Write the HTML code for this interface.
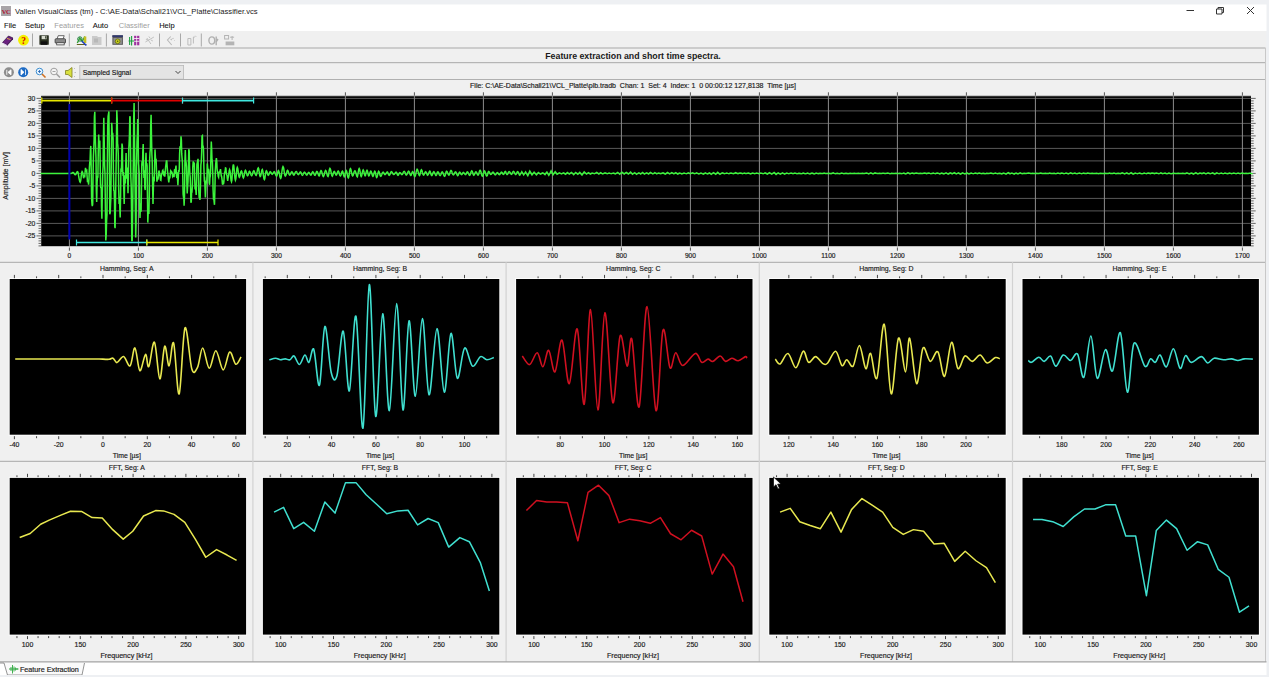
<!DOCTYPE html>
<html><head><meta charset="utf-8"><title>Vallen VisualClass</title>
<style>html,body{margin:0;padding:0;width:1269px;height:677px;overflow:hidden;background:#f0f0f0;font-family:"Liberation Sans",sans-serif} svg{display:block}</style>
</head><body><svg width="1269" height="677" viewBox="0 0 1269 677" font-family="Liberation Sans, sans-serif"><rect x="0.00" y="0.00" width="1269.00" height="677.00" fill="#f0f0f0" />
<rect x="0.00" y="0.00" width="1269.00" height="4.50" fill="#eef0f3" />
<rect x="1266.50" y="0.00" width="2.50" height="677.00" fill="#eef0f3" />
<rect x="0.00" y="4.50" width="1266.50" height="26.50" fill="#ffffff" />
<rect x="1.00" y="6.00" width="10.00" height="10.00" fill="#a8a4a8" />
<text x="6.00" y="13.80" font-size="6.5" fill="#b01030" text-anchor="middle" font-weight="bold"  font-family="Liberation Serif, serif" letter-spacing="-0.5">VC</text>
<text x="15.00" y="14.30" font-size="7.65" fill="#1a1a1a" text-anchor="start" font-weight="normal"  >Vallen VisualClass (tm) - C:\AE-Data\Schall21\VCL_Platte\Classifier.vcs</text>
<line x1="1186.50" y1="10.50" x2="1194.00" y2="10.50" stroke="#333" stroke-width="1" />
<path d="M1216.5 9 h5.5 v5 h-5.5 z M1218 9 v-1.5 h5.5 v5 h-1.5" fill="none" stroke="#333" stroke-width="1"/>
<path d="M1247 7 L1254 14 M1254 7 L1247 14" stroke="#333" stroke-width="1"/>
<text x="4.10" y="28.00" font-size="7.5" fill="#111" text-anchor="start" font-weight="normal" stroke="#111" stroke-width="0.08" >File</text>
<text x="25.00" y="28.00" font-size="7.5" fill="#111" text-anchor="start" font-weight="normal" stroke="#111" stroke-width="0.08" >Setup</text>
<text x="54.30" y="28.00" font-size="7.5" fill="#a0a0a0" text-anchor="start" font-weight="normal"  >Features</text>
<text x="92.70" y="28.00" font-size="7.5" fill="#111" text-anchor="start" font-weight="normal" stroke="#111" stroke-width="0.08" >Auto</text>
<text x="118.80" y="28.00" font-size="7.5" fill="#a0a0a0" text-anchor="start" font-weight="normal"  >Classifier</text>
<text x="159.20" y="28.00" font-size="7.5" fill="#111" text-anchor="start" font-weight="normal" stroke="#111" stroke-width="0.08" >Help</text>
<g transform="translate(2,35)"><path d="M0.5 7.5 L6.5 1 L11 3 L5 10 Z" fill="#6a2080" stroke="#301040" stroke-width="0.7"/><path d="M0.5 7.5 L5 10 L5 11 L0.8 8.7 Z" fill="#e0d0f0"/><path d="M5 10 L11 3 L11 4.2 L5 11 Z" fill="#401050"/><path d="M5 3.5 L8.5 4.5" stroke="#f0c040" stroke-width="0.9"/></g>
<circle cx="23.5" cy="40.2" r="5.4" fill="#f4f000"/>
<text x="23.50" y="43.80" font-size="9.5" fill="#d80000" text-anchor="middle" font-weight="bold"  font-family="Liberation Serif, serif">?</text>
<line x1="32.50" y1="33.50" x2="32.50" y2="46.50" stroke="#a8a8a8" stroke-width="1" />
<g transform="translate(39.4,35.2)"><rect x="0" y="0" width="9.4" height="9.6" rx="0.6" fill="#2a3020"/><rect x="2.2" y="0.6" width="5" height="3.4" fill="#d8dcd0"/><rect x="1.5" y="6.2" width="6.4" height="3.4" fill="#101010"/><rect x="5.8" y="1" width="1" height="2.4" fill="#2a3020"/></g>
<g transform="translate(54.7,35.2)"><path d="M2.5 3.5 L3.5 0.5 H9.5 L8.5 3.5" fill="#fff" stroke="#444" stroke-width="0.8"/><rect x="0.4" y="3.5" width="10.4" height="4.5" rx="1" fill="#8a8a8a" stroke="#333" stroke-width="0.8"/><rect x="2" y="7.5" width="7.5" height="2.2" fill="#eee" stroke="#444" stroke-width="0.8"/></g>
<line x1="69.30" y1="33.50" x2="69.30" y2="46.50" stroke="#a8a8a8" stroke-width="1" />
<g transform="translate(76.3,35)"><path d="M0.5 9.5 H10" stroke="#606020" stroke-width="1"/><path d="M1 8 L3.5 3 L6 6.5 L8.5 1.5" stroke="#30a030" stroke-width="1.4" fill="none"/><rect x="7.5" y="1.5" width="2.5" height="6.5" fill="#c8c020"/><circle cx="3.6" cy="4" r="2.2" fill="none" stroke="#208040" stroke-width="1"/><path d="M5.5 6 L10 10.5" stroke="#2040c0" stroke-width="1.6"/></g>
<g transform="translate(92,35.5)"><path d="M0 0.5 H5 L6 1.5 H9.5 V9.5 H0 Z" fill="#cacaca"/><rect x="2" y="3" width="4" height="4" fill="#b8b8b8"/></g>
<line x1="106.40" y1="33.50" x2="106.40" y2="46.50" stroke="#a8a8a8" stroke-width="1" />
<g transform="translate(112.4,35.3)"><rect x="0" y="0" width="10.5" height="9.5" fill="#555"/><rect x="0" y="0" width="10.5" height="1.8" fill="#303870"/><rect x="1" y="2.6" width="8.5" height="6" fill="#909090"/><circle cx="5.25" cy="6" r="2.4" fill="#c8d020" stroke="#5a6000" stroke-width="0.7"/><circle cx="5.25" cy="6" r="0.8" fill="#5a6000"/></g>
<g transform="translate(128.6,35)"><path d="M1 2 V10 M3 1 V10.5 M0 6 H6" stroke="#20a040" stroke-width="1.1"/><rect x="5.5" y="0.8" width="2.2" height="9.5" fill="#a030a0"/><rect x="8.5" y="0.8" width="2.2" height="9.5" fill="#a030a0"/><path d="M5.5 3.5 H10.7 M5.5 6.3 H10.7" stroke="#fff" stroke-width="0.8"/></g>
<g transform="translate(144.9,35)" stroke="#bcbcbc" stroke-width="0.9" fill="none"><path d="M0.5 7 L9 2 M2 3 L6 9 M1 4.5 L3 5 M6 5 L8 6 M4 1.5 L5 3"/></g>
<line x1="159.50" y1="33.50" x2="159.50" y2="46.50" stroke="#a8a8a8" stroke-width="1" />
<g transform="translate(166.7,35)" stroke="#b8b8b8" stroke-width="1.1" fill="none"><path d="M4 1.5 L0.8 5 L5 10 M4 4 L5 5 M6 3 L6.5 4 M7.5 5.5 L8 5.5"/></g>
<line x1="180.50" y1="33.50" x2="180.50" y2="46.50" stroke="#a8a8a8" stroke-width="1" />
<g transform="translate(186.9,35)" stroke="#bcbcbc" stroke-width="1" fill="none"><path d="M1 3.5 V10 M4 3.5 V10 M1 3.5 H4 M1 10 H4 M6.5 2 V8.5 M6.5 2 H8 M8.5 0.8 L9.2 1.8"/></g>
<line x1="201.30" y1="33.50" x2="201.30" y2="46.50" stroke="#a8a8a8" stroke-width="1" />
<g transform="translate(208.2,35)" stroke="#b0b0b0" stroke-width="1.4" fill="none"><ellipse cx="3.6" cy="5.5" rx="2.9" ry="3.6"/><path d="M8 1.5 V10.2 M9.8 4 L7.5 7.5"/></g>
<g transform="translate(224.1,35)" fill="#b4b4b4"><rect x="0.5" y="0.5" width="4" height="3.5" fill="none" stroke="#b4b4b4" stroke-width="1"/><path d="M6 2.2 H10 M8 1 V5" stroke="#b4b4b4" stroke-width="1" fill="none"/><rect x="1.5" y="6.5" width="8.7" height="3.8"/></g>
<line x1="0.00" y1="48.00" x2="1265.50" y2="48.00" stroke="#a8a8a8" stroke-width="1" />
<text x="633.00" y="59.30" font-size="8.8" fill="#1a1a1a" text-anchor="middle" font-weight="bold"  >Feature extraction and short time spectra.</text>
<line x1="0.00" y1="62.70" x2="1265.50" y2="62.70" stroke="#a8a8a8" stroke-width="1" />
<circle cx="8.9" cy="72.3" r="5" fill="#8c8c8c"/><path d="M6.8 69.8 V74.8 M11 69.8 L8 72.3 L11 74.8 Z" fill="#fff" stroke="#fff" stroke-width="0.9"/>
<circle cx="23.2" cy="72.3" r="5" fill="#1c6ac4"/><path d="M21 69.5 L24 72.3 L21 75 Z M25.5 69.5 V75" fill="#fff" stroke="#fff" stroke-width="0.8"/>
<g transform="translate(35,67)"><circle cx="4.5" cy="4.5" r="3.3" fill="#e8f4ff" stroke="#4090d0" stroke-width="1"/><path d="M3 4.5 H6 M4.5 3 V6" stroke="#2060b0" stroke-width="0.8"/><path d="M7 7 L10.5 10.5" stroke="#d07020" stroke-width="1.6"/></g>
<g transform="translate(49.5,67)"><circle cx="4.5" cy="4.5" r="3.3" fill="#f4f4f4" stroke="#a0a0a0" stroke-width="1"/><path d="M3 4.5 H6" stroke="#909090" stroke-width="0.8"/><path d="M7 7 L10.5 10.5" stroke="#a0a0a0" stroke-width="1.6"/></g>
<g transform="translate(65,67)"><path d="M0.5 3.5 H3 L7 0.5 V10.5 L3 7.5 H0.5 Z" fill="#d8e040" stroke="#808020" stroke-width="0.8"/><path d="M9 2 L10 1 M9.5 5.5 H11 M9 9 L10 10" stroke="#b0b0b0" stroke-width="0.8"/></g>
<rect x="79.80" y="65.40" width="103.80" height="13.80" fill="#e4e4e4" stroke="#b8b8b8" stroke-width="0.8"/>
<text x="82.70" y="74.90" font-size="6.9" fill="#222" text-anchor="start" font-weight="normal" stroke="#222" stroke-width="0.18" >Sampled Signal</text>
<path d="M175.5 71 L178 73.5 L180.5 71" fill="none" stroke="#333" stroke-width="0.9"/>
<line x1="0.00" y1="79.50" x2="1265.50" y2="79.50" stroke="#b0b0b0" stroke-width="1" />
<text x="633.00" y="88.30" font-size="7.0" fill="#222" text-anchor="middle" font-weight="normal" stroke="#222" stroke-width="0.18" xml:space="preserve">File: C:\AE-Data\Schall21\VCL_Platte\plb.tradb  Chan: 1  Set: 4  Index: 1  0 00:00:12 127,8138  Time [µs]</text>
<rect x="41.20" y="95.90" width="1209.80" height="150.30" fill="#000" />
<line x1="41.20" y1="96.40" x2="1251.00" y2="96.40" stroke="#3a3a3a" stroke-width="1" />
<line x1="41.20" y1="235.90" x2="1251.00" y2="235.90" stroke="#5a5a5a" stroke-width="1" />
<line x1="41.20" y1="223.40" x2="1251.00" y2="223.40" stroke="#5a5a5a" stroke-width="1" />
<line x1="41.20" y1="210.90" x2="1251.00" y2="210.90" stroke="#5a5a5a" stroke-width="1" />
<line x1="41.20" y1="198.40" x2="1251.00" y2="198.40" stroke="#5a5a5a" stroke-width="1" />
<line x1="41.20" y1="185.90" x2="1251.00" y2="185.90" stroke="#5a5a5a" stroke-width="1" />
<line x1="41.20" y1="173.40" x2="1251.00" y2="173.40" stroke="#5a5a5a" stroke-width="1" />
<line x1="41.20" y1="160.90" x2="1251.00" y2="160.90" stroke="#5a5a5a" stroke-width="1" />
<line x1="41.20" y1="148.40" x2="1251.00" y2="148.40" stroke="#5a5a5a" stroke-width="1" />
<line x1="41.20" y1="135.90" x2="1251.00" y2="135.90" stroke="#5a5a5a" stroke-width="1" />
<line x1="41.20" y1="123.40" x2="1251.00" y2="123.40" stroke="#5a5a5a" stroke-width="1" />
<line x1="41.20" y1="110.90" x2="1251.00" y2="110.90" stroke="#5a5a5a" stroke-width="1" />
<line x1="41.20" y1="98.40" x2="1251.00" y2="98.40" stroke="#5a5a5a" stroke-width="1" />
<line x1="69.40" y1="95.90" x2="69.40" y2="246.20" stroke="#8c8c8c" stroke-width="1" />
<line x1="69.40" y1="92.30" x2="69.40" y2="95.60" stroke="#555" stroke-width="1" />
<line x1="69.40" y1="247.50" x2="69.40" y2="250.70" stroke="#555" stroke-width="1" />
<text x="69.40" y="257.80" font-size="6.6" fill="#1e1e1e" text-anchor="middle" font-weight="normal" stroke="#1e1e1e" stroke-width="0.18" >0</text>
<line x1="138.40" y1="95.90" x2="138.40" y2="246.20" stroke="#8c8c8c" stroke-width="1" />
<line x1="138.40" y1="92.30" x2="138.40" y2="95.60" stroke="#555" stroke-width="1" />
<line x1="138.40" y1="247.50" x2="138.40" y2="250.70" stroke="#555" stroke-width="1" />
<text x="138.40" y="257.80" font-size="6.6" fill="#1e1e1e" text-anchor="middle" font-weight="normal" stroke="#1e1e1e" stroke-width="0.18" >100</text>
<line x1="207.40" y1="95.90" x2="207.40" y2="246.20" stroke="#8c8c8c" stroke-width="1" />
<line x1="207.40" y1="92.30" x2="207.40" y2="95.60" stroke="#555" stroke-width="1" />
<line x1="207.40" y1="247.50" x2="207.40" y2="250.70" stroke="#555" stroke-width="1" />
<text x="207.40" y="257.80" font-size="6.6" fill="#1e1e1e" text-anchor="middle" font-weight="normal" stroke="#1e1e1e" stroke-width="0.18" >200</text>
<line x1="276.40" y1="95.90" x2="276.40" y2="246.20" stroke="#8c8c8c" stroke-width="1" />
<line x1="276.40" y1="92.30" x2="276.40" y2="95.60" stroke="#555" stroke-width="1" />
<line x1="276.40" y1="247.50" x2="276.40" y2="250.70" stroke="#555" stroke-width="1" />
<text x="276.40" y="257.80" font-size="6.6" fill="#1e1e1e" text-anchor="middle" font-weight="normal" stroke="#1e1e1e" stroke-width="0.18" >300</text>
<line x1="345.40" y1="95.90" x2="345.40" y2="246.20" stroke="#8c8c8c" stroke-width="1" />
<line x1="345.40" y1="92.30" x2="345.40" y2="95.60" stroke="#555" stroke-width="1" />
<line x1="345.40" y1="247.50" x2="345.40" y2="250.70" stroke="#555" stroke-width="1" />
<text x="345.40" y="257.80" font-size="6.6" fill="#1e1e1e" text-anchor="middle" font-weight="normal" stroke="#1e1e1e" stroke-width="0.18" >400</text>
<line x1="414.40" y1="95.90" x2="414.40" y2="246.20" stroke="#8c8c8c" stroke-width="1" />
<line x1="414.40" y1="92.30" x2="414.40" y2="95.60" stroke="#555" stroke-width="1" />
<line x1="414.40" y1="247.50" x2="414.40" y2="250.70" stroke="#555" stroke-width="1" />
<text x="414.40" y="257.80" font-size="6.6" fill="#1e1e1e" text-anchor="middle" font-weight="normal" stroke="#1e1e1e" stroke-width="0.18" >500</text>
<line x1="483.40" y1="95.90" x2="483.40" y2="246.20" stroke="#8c8c8c" stroke-width="1" />
<line x1="483.40" y1="92.30" x2="483.40" y2="95.60" stroke="#555" stroke-width="1" />
<line x1="483.40" y1="247.50" x2="483.40" y2="250.70" stroke="#555" stroke-width="1" />
<text x="483.40" y="257.80" font-size="6.6" fill="#1e1e1e" text-anchor="middle" font-weight="normal" stroke="#1e1e1e" stroke-width="0.18" >600</text>
<line x1="552.40" y1="95.90" x2="552.40" y2="246.20" stroke="#8c8c8c" stroke-width="1" />
<line x1="552.40" y1="92.30" x2="552.40" y2="95.60" stroke="#555" stroke-width="1" />
<line x1="552.40" y1="247.50" x2="552.40" y2="250.70" stroke="#555" stroke-width="1" />
<text x="552.40" y="257.80" font-size="6.6" fill="#1e1e1e" text-anchor="middle" font-weight="normal" stroke="#1e1e1e" stroke-width="0.18" >700</text>
<line x1="621.40" y1="95.90" x2="621.40" y2="246.20" stroke="#8c8c8c" stroke-width="1" />
<line x1="621.40" y1="92.30" x2="621.40" y2="95.60" stroke="#555" stroke-width="1" />
<line x1="621.40" y1="247.50" x2="621.40" y2="250.70" stroke="#555" stroke-width="1" />
<text x="621.40" y="257.80" font-size="6.6" fill="#1e1e1e" text-anchor="middle" font-weight="normal" stroke="#1e1e1e" stroke-width="0.18" >800</text>
<line x1="690.40" y1="95.90" x2="690.40" y2="246.20" stroke="#8c8c8c" stroke-width="1" />
<line x1="690.40" y1="92.30" x2="690.40" y2="95.60" stroke="#555" stroke-width="1" />
<line x1="690.40" y1="247.50" x2="690.40" y2="250.70" stroke="#555" stroke-width="1" />
<text x="690.40" y="257.80" font-size="6.6" fill="#1e1e1e" text-anchor="middle" font-weight="normal" stroke="#1e1e1e" stroke-width="0.18" >900</text>
<line x1="759.40" y1="95.90" x2="759.40" y2="246.20" stroke="#8c8c8c" stroke-width="1" />
<line x1="759.40" y1="92.30" x2="759.40" y2="95.60" stroke="#555" stroke-width="1" />
<line x1="759.40" y1="247.50" x2="759.40" y2="250.70" stroke="#555" stroke-width="1" />
<text x="759.40" y="257.80" font-size="6.6" fill="#1e1e1e" text-anchor="middle" font-weight="normal" stroke="#1e1e1e" stroke-width="0.18" >1000</text>
<line x1="828.40" y1="95.90" x2="828.40" y2="246.20" stroke="#8c8c8c" stroke-width="1" />
<line x1="828.40" y1="92.30" x2="828.40" y2="95.60" stroke="#555" stroke-width="1" />
<line x1="828.40" y1="247.50" x2="828.40" y2="250.70" stroke="#555" stroke-width="1" />
<text x="828.40" y="257.80" font-size="6.6" fill="#1e1e1e" text-anchor="middle" font-weight="normal" stroke="#1e1e1e" stroke-width="0.18" >1100</text>
<line x1="897.40" y1="95.90" x2="897.40" y2="246.20" stroke="#8c8c8c" stroke-width="1" />
<line x1="897.40" y1="92.30" x2="897.40" y2="95.60" stroke="#555" stroke-width="1" />
<line x1="897.40" y1="247.50" x2="897.40" y2="250.70" stroke="#555" stroke-width="1" />
<text x="897.40" y="257.80" font-size="6.6" fill="#1e1e1e" text-anchor="middle" font-weight="normal" stroke="#1e1e1e" stroke-width="0.18" >1200</text>
<line x1="966.40" y1="95.90" x2="966.40" y2="246.20" stroke="#8c8c8c" stroke-width="1" />
<line x1="966.40" y1="92.30" x2="966.40" y2="95.60" stroke="#555" stroke-width="1" />
<line x1="966.40" y1="247.50" x2="966.40" y2="250.70" stroke="#555" stroke-width="1" />
<text x="966.40" y="257.80" font-size="6.6" fill="#1e1e1e" text-anchor="middle" font-weight="normal" stroke="#1e1e1e" stroke-width="0.18" >1300</text>
<line x1="1035.40" y1="95.90" x2="1035.40" y2="246.20" stroke="#8c8c8c" stroke-width="1" />
<line x1="1035.40" y1="92.30" x2="1035.40" y2="95.60" stroke="#555" stroke-width="1" />
<line x1="1035.40" y1="247.50" x2="1035.40" y2="250.70" stroke="#555" stroke-width="1" />
<text x="1035.40" y="257.80" font-size="6.6" fill="#1e1e1e" text-anchor="middle" font-weight="normal" stroke="#1e1e1e" stroke-width="0.18" >1400</text>
<line x1="1104.40" y1="95.90" x2="1104.40" y2="246.20" stroke="#8c8c8c" stroke-width="1" />
<line x1="1104.40" y1="92.30" x2="1104.40" y2="95.60" stroke="#555" stroke-width="1" />
<line x1="1104.40" y1="247.50" x2="1104.40" y2="250.70" stroke="#555" stroke-width="1" />
<text x="1104.40" y="257.80" font-size="6.6" fill="#1e1e1e" text-anchor="middle" font-weight="normal" stroke="#1e1e1e" stroke-width="0.18" >1500</text>
<line x1="1173.40" y1="95.90" x2="1173.40" y2="246.20" stroke="#8c8c8c" stroke-width="1" />
<line x1="1173.40" y1="92.30" x2="1173.40" y2="95.60" stroke="#555" stroke-width="1" />
<line x1="1173.40" y1="247.50" x2="1173.40" y2="250.70" stroke="#555" stroke-width="1" />
<text x="1173.40" y="257.80" font-size="6.6" fill="#1e1e1e" text-anchor="middle" font-weight="normal" stroke="#1e1e1e" stroke-width="0.18" >1600</text>
<line x1="1242.40" y1="95.90" x2="1242.40" y2="246.20" stroke="#8c8c8c" stroke-width="1" />
<line x1="1242.40" y1="92.30" x2="1242.40" y2="95.60" stroke="#555" stroke-width="1" />
<line x1="1242.40" y1="247.50" x2="1242.40" y2="250.70" stroke="#555" stroke-width="1" />
<text x="1242.40" y="257.80" font-size="6.6" fill="#1e1e1e" text-anchor="middle" font-weight="normal" stroke="#1e1e1e" stroke-width="0.18" >1700</text>
<line x1="38.50" y1="245.90" x2="41.20" y2="245.90" stroke="#444" stroke-width="0.8" />
<line x1="1251.00" y1="245.90" x2="1253.70" y2="245.90" stroke="#444" stroke-width="0.8" />
<line x1="38.50" y1="243.40" x2="41.20" y2="243.40" stroke="#444" stroke-width="0.8" />
<line x1="1251.00" y1="243.40" x2="1253.70" y2="243.40" stroke="#444" stroke-width="0.8" />
<line x1="38.50" y1="240.90" x2="41.20" y2="240.90" stroke="#444" stroke-width="0.8" />
<line x1="1251.00" y1="240.90" x2="1253.70" y2="240.90" stroke="#444" stroke-width="0.8" />
<line x1="38.50" y1="238.40" x2="41.20" y2="238.40" stroke="#444" stroke-width="0.8" />
<line x1="1251.00" y1="238.40" x2="1253.70" y2="238.40" stroke="#444" stroke-width="0.8" />
<line x1="36.50" y1="235.90" x2="41.20" y2="235.90" stroke="#444" stroke-width="0.8" />
<line x1="1251.00" y1="235.90" x2="1255.70" y2="235.90" stroke="#444" stroke-width="0.8" />
<line x1="38.50" y1="233.40" x2="41.20" y2="233.40" stroke="#444" stroke-width="0.8" />
<line x1="1251.00" y1="233.40" x2="1253.70" y2="233.40" stroke="#444" stroke-width="0.8" />
<line x1="38.50" y1="230.90" x2="41.20" y2="230.90" stroke="#444" stroke-width="0.8" />
<line x1="1251.00" y1="230.90" x2="1253.70" y2="230.90" stroke="#444" stroke-width="0.8" />
<line x1="38.50" y1="228.40" x2="41.20" y2="228.40" stroke="#444" stroke-width="0.8" />
<line x1="1251.00" y1="228.40" x2="1253.70" y2="228.40" stroke="#444" stroke-width="0.8" />
<line x1="38.50" y1="225.90" x2="41.20" y2="225.90" stroke="#444" stroke-width="0.8" />
<line x1="1251.00" y1="225.90" x2="1253.70" y2="225.90" stroke="#444" stroke-width="0.8" />
<line x1="36.50" y1="223.40" x2="41.20" y2="223.40" stroke="#444" stroke-width="0.8" />
<line x1="1251.00" y1="223.40" x2="1255.70" y2="223.40" stroke="#444" stroke-width="0.8" />
<line x1="38.50" y1="220.90" x2="41.20" y2="220.90" stroke="#444" stroke-width="0.8" />
<line x1="1251.00" y1="220.90" x2="1253.70" y2="220.90" stroke="#444" stroke-width="0.8" />
<line x1="38.50" y1="218.40" x2="41.20" y2="218.40" stroke="#444" stroke-width="0.8" />
<line x1="1251.00" y1="218.40" x2="1253.70" y2="218.40" stroke="#444" stroke-width="0.8" />
<line x1="38.50" y1="215.90" x2="41.20" y2="215.90" stroke="#444" stroke-width="0.8" />
<line x1="1251.00" y1="215.90" x2="1253.70" y2="215.90" stroke="#444" stroke-width="0.8" />
<line x1="38.50" y1="213.40" x2="41.20" y2="213.40" stroke="#444" stroke-width="0.8" />
<line x1="1251.00" y1="213.40" x2="1253.70" y2="213.40" stroke="#444" stroke-width="0.8" />
<line x1="36.50" y1="210.90" x2="41.20" y2="210.90" stroke="#444" stroke-width="0.8" />
<line x1="1251.00" y1="210.90" x2="1255.70" y2="210.90" stroke="#444" stroke-width="0.8" />
<line x1="38.50" y1="208.40" x2="41.20" y2="208.40" stroke="#444" stroke-width="0.8" />
<line x1="1251.00" y1="208.40" x2="1253.70" y2="208.40" stroke="#444" stroke-width="0.8" />
<line x1="38.50" y1="205.90" x2="41.20" y2="205.90" stroke="#444" stroke-width="0.8" />
<line x1="1251.00" y1="205.90" x2="1253.70" y2="205.90" stroke="#444" stroke-width="0.8" />
<line x1="38.50" y1="203.40" x2="41.20" y2="203.40" stroke="#444" stroke-width="0.8" />
<line x1="1251.00" y1="203.40" x2="1253.70" y2="203.40" stroke="#444" stroke-width="0.8" />
<line x1="38.50" y1="200.90" x2="41.20" y2="200.90" stroke="#444" stroke-width="0.8" />
<line x1="1251.00" y1="200.90" x2="1253.70" y2="200.90" stroke="#444" stroke-width="0.8" />
<line x1="36.50" y1="198.40" x2="41.20" y2="198.40" stroke="#444" stroke-width="0.8" />
<line x1="1251.00" y1="198.40" x2="1255.70" y2="198.40" stroke="#444" stroke-width="0.8" />
<line x1="38.50" y1="195.90" x2="41.20" y2="195.90" stroke="#444" stroke-width="0.8" />
<line x1="1251.00" y1="195.90" x2="1253.70" y2="195.90" stroke="#444" stroke-width="0.8" />
<line x1="38.50" y1="193.40" x2="41.20" y2="193.40" stroke="#444" stroke-width="0.8" />
<line x1="1251.00" y1="193.40" x2="1253.70" y2="193.40" stroke="#444" stroke-width="0.8" />
<line x1="38.50" y1="190.90" x2="41.20" y2="190.90" stroke="#444" stroke-width="0.8" />
<line x1="1251.00" y1="190.90" x2="1253.70" y2="190.90" stroke="#444" stroke-width="0.8" />
<line x1="38.50" y1="188.40" x2="41.20" y2="188.40" stroke="#444" stroke-width="0.8" />
<line x1="1251.00" y1="188.40" x2="1253.70" y2="188.40" stroke="#444" stroke-width="0.8" />
<line x1="36.50" y1="185.90" x2="41.20" y2="185.90" stroke="#444" stroke-width="0.8" />
<line x1="1251.00" y1="185.90" x2="1255.70" y2="185.90" stroke="#444" stroke-width="0.8" />
<line x1="38.50" y1="183.40" x2="41.20" y2="183.40" stroke="#444" stroke-width="0.8" />
<line x1="1251.00" y1="183.40" x2="1253.70" y2="183.40" stroke="#444" stroke-width="0.8" />
<line x1="38.50" y1="180.90" x2="41.20" y2="180.90" stroke="#444" stroke-width="0.8" />
<line x1="1251.00" y1="180.90" x2="1253.70" y2="180.90" stroke="#444" stroke-width="0.8" />
<line x1="38.50" y1="178.40" x2="41.20" y2="178.40" stroke="#444" stroke-width="0.8" />
<line x1="1251.00" y1="178.40" x2="1253.70" y2="178.40" stroke="#444" stroke-width="0.8" />
<line x1="38.50" y1="175.90" x2="41.20" y2="175.90" stroke="#444" stroke-width="0.8" />
<line x1="1251.00" y1="175.90" x2="1253.70" y2="175.90" stroke="#444" stroke-width="0.8" />
<line x1="36.50" y1="173.40" x2="41.20" y2="173.40" stroke="#444" stroke-width="0.8" />
<line x1="1251.00" y1="173.40" x2="1255.70" y2="173.40" stroke="#444" stroke-width="0.8" />
<line x1="38.50" y1="170.90" x2="41.20" y2="170.90" stroke="#444" stroke-width="0.8" />
<line x1="1251.00" y1="170.90" x2="1253.70" y2="170.90" stroke="#444" stroke-width="0.8" />
<line x1="38.50" y1="168.40" x2="41.20" y2="168.40" stroke="#444" stroke-width="0.8" />
<line x1="1251.00" y1="168.40" x2="1253.70" y2="168.40" stroke="#444" stroke-width="0.8" />
<line x1="38.50" y1="165.90" x2="41.20" y2="165.90" stroke="#444" stroke-width="0.8" />
<line x1="1251.00" y1="165.90" x2="1253.70" y2="165.90" stroke="#444" stroke-width="0.8" />
<line x1="38.50" y1="163.40" x2="41.20" y2="163.40" stroke="#444" stroke-width="0.8" />
<line x1="1251.00" y1="163.40" x2="1253.70" y2="163.40" stroke="#444" stroke-width="0.8" />
<line x1="36.50" y1="160.90" x2="41.20" y2="160.90" stroke="#444" stroke-width="0.8" />
<line x1="1251.00" y1="160.90" x2="1255.70" y2="160.90" stroke="#444" stroke-width="0.8" />
<line x1="38.50" y1="158.40" x2="41.20" y2="158.40" stroke="#444" stroke-width="0.8" />
<line x1="1251.00" y1="158.40" x2="1253.70" y2="158.40" stroke="#444" stroke-width="0.8" />
<line x1="38.50" y1="155.90" x2="41.20" y2="155.90" stroke="#444" stroke-width="0.8" />
<line x1="1251.00" y1="155.90" x2="1253.70" y2="155.90" stroke="#444" stroke-width="0.8" />
<line x1="38.50" y1="153.40" x2="41.20" y2="153.40" stroke="#444" stroke-width="0.8" />
<line x1="1251.00" y1="153.40" x2="1253.70" y2="153.40" stroke="#444" stroke-width="0.8" />
<line x1="38.50" y1="150.90" x2="41.20" y2="150.90" stroke="#444" stroke-width="0.8" />
<line x1="1251.00" y1="150.90" x2="1253.70" y2="150.90" stroke="#444" stroke-width="0.8" />
<line x1="36.50" y1="148.40" x2="41.20" y2="148.40" stroke="#444" stroke-width="0.8" />
<line x1="1251.00" y1="148.40" x2="1255.70" y2="148.40" stroke="#444" stroke-width="0.8" />
<line x1="38.50" y1="145.90" x2="41.20" y2="145.90" stroke="#444" stroke-width="0.8" />
<line x1="1251.00" y1="145.90" x2="1253.70" y2="145.90" stroke="#444" stroke-width="0.8" />
<line x1="38.50" y1="143.40" x2="41.20" y2="143.40" stroke="#444" stroke-width="0.8" />
<line x1="1251.00" y1="143.40" x2="1253.70" y2="143.40" stroke="#444" stroke-width="0.8" />
<line x1="38.50" y1="140.90" x2="41.20" y2="140.90" stroke="#444" stroke-width="0.8" />
<line x1="1251.00" y1="140.90" x2="1253.70" y2="140.90" stroke="#444" stroke-width="0.8" />
<line x1="38.50" y1="138.40" x2="41.20" y2="138.40" stroke="#444" stroke-width="0.8" />
<line x1="1251.00" y1="138.40" x2="1253.70" y2="138.40" stroke="#444" stroke-width="0.8" />
<line x1="36.50" y1="135.90" x2="41.20" y2="135.90" stroke="#444" stroke-width="0.8" />
<line x1="1251.00" y1="135.90" x2="1255.70" y2="135.90" stroke="#444" stroke-width="0.8" />
<line x1="38.50" y1="133.40" x2="41.20" y2="133.40" stroke="#444" stroke-width="0.8" />
<line x1="1251.00" y1="133.40" x2="1253.70" y2="133.40" stroke="#444" stroke-width="0.8" />
<line x1="38.50" y1="130.90" x2="41.20" y2="130.90" stroke="#444" stroke-width="0.8" />
<line x1="1251.00" y1="130.90" x2="1253.70" y2="130.90" stroke="#444" stroke-width="0.8" />
<line x1="38.50" y1="128.40" x2="41.20" y2="128.40" stroke="#444" stroke-width="0.8" />
<line x1="1251.00" y1="128.40" x2="1253.70" y2="128.40" stroke="#444" stroke-width="0.8" />
<line x1="38.50" y1="125.90" x2="41.20" y2="125.90" stroke="#444" stroke-width="0.8" />
<line x1="1251.00" y1="125.90" x2="1253.70" y2="125.90" stroke="#444" stroke-width="0.8" />
<line x1="36.50" y1="123.40" x2="41.20" y2="123.40" stroke="#444" stroke-width="0.8" />
<line x1="1251.00" y1="123.40" x2="1255.70" y2="123.40" stroke="#444" stroke-width="0.8" />
<line x1="38.50" y1="120.90" x2="41.20" y2="120.90" stroke="#444" stroke-width="0.8" />
<line x1="1251.00" y1="120.90" x2="1253.70" y2="120.90" stroke="#444" stroke-width="0.8" />
<line x1="38.50" y1="118.40" x2="41.20" y2="118.40" stroke="#444" stroke-width="0.8" />
<line x1="1251.00" y1="118.40" x2="1253.70" y2="118.40" stroke="#444" stroke-width="0.8" />
<line x1="38.50" y1="115.90" x2="41.20" y2="115.90" stroke="#444" stroke-width="0.8" />
<line x1="1251.00" y1="115.90" x2="1253.70" y2="115.90" stroke="#444" stroke-width="0.8" />
<line x1="38.50" y1="113.40" x2="41.20" y2="113.40" stroke="#444" stroke-width="0.8" />
<line x1="1251.00" y1="113.40" x2="1253.70" y2="113.40" stroke="#444" stroke-width="0.8" />
<line x1="36.50" y1="110.90" x2="41.20" y2="110.90" stroke="#444" stroke-width="0.8" />
<line x1="1251.00" y1="110.90" x2="1255.70" y2="110.90" stroke="#444" stroke-width="0.8" />
<line x1="38.50" y1="108.40" x2="41.20" y2="108.40" stroke="#444" stroke-width="0.8" />
<line x1="1251.00" y1="108.40" x2="1253.70" y2="108.40" stroke="#444" stroke-width="0.8" />
<line x1="38.50" y1="105.90" x2="41.20" y2="105.90" stroke="#444" stroke-width="0.8" />
<line x1="1251.00" y1="105.90" x2="1253.70" y2="105.90" stroke="#444" stroke-width="0.8" />
<line x1="38.50" y1="103.40" x2="41.20" y2="103.40" stroke="#444" stroke-width="0.8" />
<line x1="1251.00" y1="103.40" x2="1253.70" y2="103.40" stroke="#444" stroke-width="0.8" />
<line x1="38.50" y1="100.90" x2="41.20" y2="100.90" stroke="#444" stroke-width="0.8" />
<line x1="1251.00" y1="100.90" x2="1253.70" y2="100.90" stroke="#444" stroke-width="0.8" />
<line x1="36.50" y1="98.40" x2="41.20" y2="98.40" stroke="#444" stroke-width="0.8" />
<line x1="1251.00" y1="98.40" x2="1255.70" y2="98.40" stroke="#444" stroke-width="0.8" />
<text x="35.40" y="238.30" font-size="6.8" fill="#1e1e1e" text-anchor="end" font-weight="normal" stroke="#1e1e1e" stroke-width="0.18" >-25</text>
<text x="35.40" y="225.80" font-size="6.8" fill="#1e1e1e" text-anchor="end" font-weight="normal" stroke="#1e1e1e" stroke-width="0.18" >-20</text>
<text x="35.40" y="213.30" font-size="6.8" fill="#1e1e1e" text-anchor="end" font-weight="normal" stroke="#1e1e1e" stroke-width="0.18" >-15</text>
<text x="35.40" y="200.80" font-size="6.8" fill="#1e1e1e" text-anchor="end" font-weight="normal" stroke="#1e1e1e" stroke-width="0.18" >-10</text>
<text x="35.40" y="188.30" font-size="6.8" fill="#1e1e1e" text-anchor="end" font-weight="normal" stroke="#1e1e1e" stroke-width="0.18" >-5</text>
<text x="35.40" y="175.80" font-size="6.8" fill="#1e1e1e" text-anchor="end" font-weight="normal" stroke="#1e1e1e" stroke-width="0.18" >0</text>
<text x="35.40" y="163.30" font-size="6.8" fill="#1e1e1e" text-anchor="end" font-weight="normal" stroke="#1e1e1e" stroke-width="0.18" >5</text>
<text x="35.40" y="150.80" font-size="6.8" fill="#1e1e1e" text-anchor="end" font-weight="normal" stroke="#1e1e1e" stroke-width="0.18" >10</text>
<text x="35.40" y="138.30" font-size="6.8" fill="#1e1e1e" text-anchor="end" font-weight="normal" stroke="#1e1e1e" stroke-width="0.18" >15</text>
<text x="35.40" y="125.80" font-size="6.8" fill="#1e1e1e" text-anchor="end" font-weight="normal" stroke="#1e1e1e" stroke-width="0.18" >20</text>
<text x="35.40" y="113.30" font-size="6.8" fill="#1e1e1e" text-anchor="end" font-weight="normal" stroke="#1e1e1e" stroke-width="0.18" >25</text>
<text x="35.40" y="100.80" font-size="6.8" fill="#1e1e1e" text-anchor="end" font-weight="normal" stroke="#1e1e1e" stroke-width="0.18" >30</text>
<text x="0.00" y="0.00" font-size="7.0" fill="#1e1e1e" text-anchor="middle" font-weight="normal" stroke="#1e1e1e" stroke-width="0.18" transform="translate(8.2 175.9) rotate(-90)">Amplitude [mV]</text>
<polyline points="40.4,173.4 41.8,173.4 43.2,173.4 44.6,173.4 46.0,173.4 47.4,173.4 48.8,173.4 50.2,173.4 51.6,173.4 53.0,173.4 54.4,173.4 55.8,173.4 57.2,173.4 58.6,173.4 60.0,173.4 61.4,173.4 62.8,173.4 64.1,173.4 65.5,173.4 66.9,173.4 68.3,173.4 69.7,173.4 71.1,173.4 71.5,173.3 71.9,173.1 72.3,172.8 72.7,172.5 73.1,172.5 73.4,172.6 73.8,173.0 74.2,173.6 74.5,174.2 74.9,174.7 75.3,174.8 75.6,174.6 76.0,174.0 76.4,173.2 76.8,172.4 77.1,171.9 77.5,171.7 77.9,172.2 78.3,173.6 78.6,175.7 79.0,178.1 79.4,180.2 79.8,181.6 80.2,182.2 80.6,181.1 81.0,178.5 81.3,175.2 81.7,172.5 82.1,171.5 82.5,172.1 82.9,173.6 83.2,175.9 83.6,178.2 84.0,176.6 84.4,175.9 84.8,176.2 85.1,171.8 85.5,167.9 85.9,170.0 86.3,171.1 86.7,170.6 87.1,176.3 87.5,182.2 87.9,181.2 88.3,182.1 88.6,184.6 89.0,178.4 89.4,167.5 89.7,163.1 90.1,160.0 90.4,150.7 90.8,145.9 91.2,168.6 91.6,198.3 92.0,204.3 92.3,206.1 92.7,204.2 93.0,181.0 93.4,156.4 93.7,149.9 94.1,139.5 94.4,116.8 94.8,111.8 95.2,133.4 95.6,146.9 96.0,158.5 96.3,189.5 96.7,201.9 97.1,182.8 97.5,176.6 97.9,176.7 98.3,151.0 98.7,134.4 99.1,147.3 99.4,148.3 99.8,140.4 100.1,156.9 100.5,184.4 100.8,188.3 101.2,187.3 101.5,206.9 101.9,218.7 102.3,195.1 102.7,173.2 103.1,166.1 103.4,138.6 103.8,117.8 104.2,140.5 104.6,165.0 105.0,174.5 105.4,208.3 105.8,240.4 106.2,235.2 106.6,220.7 107.0,214.4 107.3,175.2 107.7,126.4 108.1,116.3 108.5,113.8 108.9,111.4 109.4,160.1 109.8,214.2 110.2,212.7 110.6,203.4 110.9,197.6 111.3,161.1 111.7,122.8 112.0,127.3 112.4,139.5 112.7,132.8 113.1,138.8 113.4,170.4 113.8,191.2 114.1,190.2 114.5,201.5 114.8,226.7 115.1,228.2 115.6,195.2 116.0,172.3 116.4,144.0 116.8,110.2 117.2,119.4 117.6,144.2 117.9,145.8 118.3,154.8 118.7,189.3 119.1,204.0 119.5,196.7 119.8,208.6 120.2,217.5 120.6,194.0 120.9,170.0 121.3,170.4 121.6,164.0 122.0,143.5 122.4,146.8 122.7,170.9 123.1,176.0 123.4,171.9 123.8,189.5 124.2,203.9 124.6,185.8 125.0,175.2 125.4,183.5 125.7,167.7 126.1,153.0 126.5,170.1 126.9,178.8 127.3,167.5 127.6,175.7 128.0,193.2 128.4,178.2 128.7,150.1 129.1,143.1 129.4,137.4 129.8,117.0 130.1,116.3 130.5,148.2 130.8,176.0 131.2,186.0 131.5,208.4 131.8,240.4 132.2,240.4 132.6,216.3 132.9,191.4 133.3,165.2 133.7,119.1 134.1,102.9 134.5,135.3 134.9,174.1 135.3,202.4 135.7,237.4 136.1,223.2 136.5,166.8 137.0,141.8 137.4,133.9 137.7,119.0 138.1,131.6 138.5,162.9 138.9,168.5 139.3,174.2 139.6,205.4 140.0,218.0 140.4,203.3 140.7,204.4 141.1,211.8 141.4,192.7 141.8,164.3 142.1,161.1 142.5,165.8 142.8,151.4 143.2,144.1 143.6,170.5 144.0,178.0 144.4,170.3 144.8,187.9 145.2,190.0 145.6,162.4 146.0,152.8 146.3,165.0 146.7,163.2 147.1,166.1 147.5,199.3 147.8,222.6 148.2,212.2 148.6,208.0 148.9,214.0 149.3,194.0 149.6,161.2 150.0,152.5 150.4,148.5 150.7,125.2 151.1,114.7 151.5,137.1 151.9,154.7 152.2,160.7 152.6,185.5 153.0,204.1 153.4,187.8 153.8,176.7 154.2,181.6 154.6,166.2 155.0,149.4 155.4,156.7 155.7,161.3 156.1,158.9 156.5,170.7 156.9,181.6 157.3,179.7 157.7,178.7 158.1,178.8 158.5,175.0 158.9,170.6 159.3,171.6 159.7,174.5 160.1,176.3 160.5,180.1 160.9,180.4 161.3,175.8 161.7,173.7 162.1,173.5 162.5,170.8 162.9,170.2 163.3,173.1 163.6,174.2 164.0,173.1 164.4,174.6 164.8,176.7 165.2,172.8 165.6,167.1 166.0,164.2 166.4,160.9 166.8,160.9 167.2,166.7 167.6,171.8 168.0,174.6 168.4,179.5 168.8,182.3 169.1,179.7 169.5,177.5 169.9,177.6 170.2,174.9 170.6,171.1 171.0,171.9 171.4,173.7 171.8,172.2 172.2,173.0 172.6,176.4 172.9,175.9 173.3,174.0 173.7,176.6 174.1,176.6 174.5,170.0 174.9,169.7 175.2,174.0 175.6,168.7 176.0,165.5 176.4,175.3 176.8,177.9 177.1,172.3 177.5,178.4 177.9,185.3 178.3,177.6 178.6,170.1 179.0,172.3 179.3,168.6 179.6,153.9 180.0,146.4 180.3,149.4 180.7,145.5 181.0,136.3 181.4,140.2 181.7,153.4 182.1,158.6 182.4,161.9 182.8,177.4 183.1,194.2 183.5,197.2 183.8,197.2 184.1,205.6 184.5,196.6 184.9,161.8 185.3,150.0 185.7,160.8 186.1,162.4 186.5,167.1 186.9,185.4 187.2,193.4 187.6,187.3 188.0,181.9 188.4,168.0 188.8,149.2 189.2,150.8 189.5,165.7 189.9,174.5 190.2,176.8 190.6,188.3 190.9,202.8 191.3,201.7 191.6,191.6 192.0,191.7 192.4,185.2 192.8,166.2 193.2,161.4 193.6,166.6 194.0,162.5 194.3,163.4 194.7,179.5 195.1,189.5 195.4,186.5 195.8,190.0 196.2,195.0 196.5,181.9 196.9,164.4 197.3,162.6 197.6,163.4 198.0,158.7 198.4,169.3 198.8,191.5 199.2,198.0 199.5,195.4 199.9,200.0 200.2,197.4 200.6,179.2 200.9,164.9 201.3,161.5 201.7,151.5 202.0,136.0 202.4,135.6 202.7,146.1 203.1,146.2 203.5,149.2 203.9,167.8 204.3,179.5 204.6,179.0 205.0,187.8 205.4,197.4 205.8,188.8 206.2,180.6 206.6,183.4 207.0,176.0 207.3,163.4 207.7,167.7 208.1,173.6 208.5,168.8 208.8,170.6 209.2,182.9 209.6,184.8 209.9,178.0 210.3,176.1 210.6,170.0 211.0,152.2 211.3,141.5 211.7,149.9 212.0,160.0 212.4,162.3 212.7,171.4 213.1,190.0 213.5,199.6 213.8,198.4 214.2,202.3 214.5,204.8 214.9,189.0 215.3,170.8 215.7,164.3 216.0,161.1 216.4,158.1 216.8,161.8 217.1,169.1 217.5,172.3 217.9,173.3 218.2,176.4 218.6,177.3 219.0,173.2 219.4,171.3 219.7,172.5 220.1,170.7 220.5,169.2 220.9,172.9 221.3,176.2 221.6,176.3 222.0,179.1 222.4,183.9 222.8,184.1 223.1,182.8 223.5,184.0 223.9,181.7 224.3,175.2 224.7,172.3 225.1,171.3 225.5,168.0 225.9,168.2 226.2,172.5 226.6,174.8 227.0,175.3 227.3,178.3 227.7,180.8 228.1,178.0 228.5,176.0 228.9,173.0 229.3,170.5 229.6,169.6 230.0,170.8 230.4,173.8 230.7,177.5 231.1,180.6 231.5,181.7 231.9,180.1 232.2,175.8 232.6,170.5 233.0,166.2 233.4,164.5 233.8,166.0 234.2,170.0 234.6,174.8 235.0,178.7 235.4,180.2 235.8,179.0 236.2,175.7 236.6,171.7 236.9,168.4 237.3,167.2 237.7,168.1 238.1,170.6 238.5,173.8 238.9,176.3 239.3,177.2 239.6,176.8 240.0,175.6 240.3,174.1 240.7,172.5 241.0,171.3 241.4,170.9 241.8,171.6 242.2,173.3 242.6,175.5 243.0,177.2 243.4,177.9 243.8,177.1 244.2,175.3 244.6,172.9 245.0,171.0 245.4,170.3 245.7,170.7 246.1,171.7 246.5,173.1 246.9,174.4 247.2,175.5 247.6,175.8 248.0,175.4 248.4,174.2 248.8,172.8 249.1,171.6 249.5,171.2 249.9,171.6 250.4,172.8 250.8,174.2 251.2,175.4 251.6,175.8 251.9,175.5 252.3,174.5 252.7,173.3 253.0,172.0 253.4,171.1 253.8,170.7 254.1,171.0 254.5,171.9 254.9,173.1 255.3,174.3 255.7,175.1 256.1,175.4 256.4,174.9 256.8,173.5 257.2,171.6 257.5,169.7 257.9,168.3 258.3,167.8 258.7,168.6 259.0,170.8 259.4,173.5 259.8,175.7 260.2,176.5 260.6,176.1 260.9,174.8 261.3,173.0 261.6,171.3 261.9,170.0 262.3,169.5 262.6,170.2 263.0,172.0 263.3,174.6 263.7,177.1 264.0,179.0 264.4,179.6 264.8,178.8 265.1,176.6 265.5,173.8 265.9,171.6 266.3,170.7 266.6,171.0 267.0,171.8 267.3,173.0 267.6,174.1 268.0,175.0 268.3,175.3 268.7,174.9 269.1,174.0 269.5,172.9 269.9,172.0 270.3,171.7 270.7,172.0 271.1,172.6 271.4,173.5 271.8,174.1 272.2,174.4 272.6,174.1 273.0,173.5 273.4,172.6 273.8,172.0 274.2,171.7 274.6,172.0 275.0,172.8 275.4,173.9 275.8,175.0 276.2,175.8 276.6,176.1 276.9,175.6 277.3,174.2 277.7,172.5 278.1,171.1 278.4,170.6 278.8,171.1 279.2,172.6 279.6,174.5 279.9,176.5 280.3,177.9 280.7,178.4 281.1,177.6 281.4,175.5 281.8,172.5 282.2,169.6 282.6,167.4 283.0,166.6 283.4,167.2 283.8,169.0 284.1,171.3 284.5,173.7 284.9,175.5 285.3,176.1 285.7,175.7 286.1,174.7 286.5,173.2 286.9,171.7 287.2,170.7 287.6,170.3 288.0,170.8 288.4,172.0 288.8,173.5 289.2,174.7 289.6,175.1 290.0,174.9 290.4,174.3 290.8,173.4 291.1,172.6 291.5,172.0 291.9,171.7 292.3,172.1 292.7,172.9 293.0,173.9 293.4,174.8 293.8,175.1 294.2,174.9 294.6,174.2 294.9,173.3 295.3,172.4 295.7,171.7 296.1,171.5 296.5,171.7 296.9,172.3 297.2,173.0 297.6,173.8 298.0,174.4 298.4,174.6 298.7,174.4 299.0,173.9 299.4,173.2 299.7,172.6 300.1,172.1 300.4,171.9 300.8,172.3 301.2,173.1 301.6,174.2 302.0,175.1 302.4,175.4 302.8,175.1 303.2,174.3 303.6,173.3 304.0,172.5 304.4,172.2 304.8,172.4 305.2,172.9 305.6,173.7 306.0,174.4 306.4,174.9 306.8,175.1 307.2,174.8 307.5,174.2 307.9,173.3 308.3,172.7 308.7,172.4 309.1,172.6 309.4,173.1 309.8,173.8 310.2,174.4 310.5,174.9 310.9,175.1 311.3,174.8 311.6,173.9 312.0,172.9 312.4,172.1 312.7,171.7 313.1,172.0 313.5,172.6 313.8,173.5 314.2,174.4 314.6,175.1 315.0,175.3 315.4,174.9 315.7,174.0 316.1,172.7 316.5,171.8 316.9,171.4 317.3,171.7 317.6,172.5 318.0,173.6 318.4,174.7 318.7,175.6 319.1,175.9 319.5,175.4 319.8,174.0 320.2,172.4 320.6,171.1 321.0,170.6 321.4,171.0 321.8,172.1 322.2,173.6 322.6,175.1 323.0,176.1 323.3,176.5 323.7,176.1 324.1,175.0 324.5,173.5 324.9,171.9 325.3,170.8 325.6,170.4 326.0,170.8 326.4,171.9 326.8,173.4 327.2,175.0 327.6,176.1 328.0,176.5 328.4,175.7 328.8,173.7 329.1,171.2 329.5,169.2 329.9,168.4 330.3,168.9 330.7,170.3 331.1,172.3 331.5,174.2 331.9,175.6 332.3,176.1 332.6,175.6 333.0,174.5 333.4,173.0 333.8,171.8 334.2,171.4 334.5,171.6 334.9,172.3 335.2,173.2 335.6,174.2 335.9,174.9 336.3,175.1 336.7,174.7 337.0,173.7 337.4,172.4 337.8,171.4 338.2,171.0 338.6,171.4 338.9,172.3 339.3,173.5 339.6,174.7 340.0,175.6 340.4,175.9 340.8,175.4 341.2,174.2 341.6,172.8 342.0,171.6 342.4,171.1 342.8,171.6 343.1,173.0 343.5,174.7 343.9,176.1 344.2,176.7 344.6,176.1 345.0,174.6 345.4,172.7 345.8,171.2 346.2,170.6 346.6,171.1 346.9,172.4 347.3,174.3 347.6,176.1 348.0,177.4 348.3,177.9 348.7,177.3 349.0,175.6 349.4,173.3 349.7,171.0 350.1,169.3 350.4,168.7 350.8,169.2 351.1,170.5 351.5,172.3 351.9,174.1 352.2,175.5 352.6,175.9 353.0,175.6 353.3,174.7 353.7,173.4 354.1,172.1 354.5,171.2 354.9,170.8 355.3,171.2 355.7,172.3 356.1,173.8 356.5,175.3 356.9,176.4 357.3,176.8 357.6,176.0 358.0,173.9 358.4,171.3 358.8,169.3 359.2,168.5 359.6,169.2 360.0,171.2 360.4,173.7 360.8,175.7 361.2,176.5 361.6,175.9 362.0,174.2 362.4,172.2 362.8,170.6 363.2,169.9 363.6,170.5 364.0,172.0 364.3,173.8 364.7,175.2 365.1,175.8 365.5,175.3 365.8,173.9 366.2,172.2 366.6,170.8 367.0,170.3 367.4,170.8 367.7,172.2 368.1,174.0 368.5,175.4 368.8,175.9 369.2,175.5 369.6,174.3 370.0,172.8 370.4,171.6 370.8,171.1 371.1,171.5 371.5,172.4 371.9,173.8 372.2,175.1 372.6,176.1 372.9,176.4 373.3,175.9 373.7,174.6 374.1,173.0 374.5,171.7 374.8,171.3 375.2,171.8 375.6,173.4 376.0,175.3 376.3,176.9 376.7,177.5 377.1,176.9 377.5,175.4 377.9,173.5 378.3,171.9 378.6,171.3 379.0,171.7 379.3,172.6 379.7,173.8 380.0,175.1 380.4,176.0 380.8,176.3 381.1,176.0 381.5,175.2 381.9,174.2 382.3,173.1 382.7,172.4 383.1,172.1 383.5,172.3 383.9,173.0 384.2,173.7 384.6,174.4 385.0,174.6 385.4,174.4 385.7,174.0 386.1,173.3 386.5,172.7 386.8,172.2 387.2,172.0 387.6,172.3 388.0,173.1 388.4,174.2 388.8,175.0 389.2,175.3 389.6,175.0 390.0,174.4 390.3,173.4 390.7,172.5 391.1,171.8 391.4,171.6 391.8,171.8 392.2,172.3 392.6,173.0 393.0,173.8 393.4,174.3 393.8,174.5 394.2,174.4 394.6,173.9 395.0,173.3 395.4,172.7 395.7,172.3 396.1,172.1 396.5,172.4 396.9,173.2 397.2,174.2 397.6,175.0 398.0,175.3 398.4,175.0 398.7,174.3 399.1,173.5 399.5,172.8 399.9,172.6 400.3,172.8 400.7,173.3 401.1,173.9 401.5,174.4 401.9,174.6 402.3,174.4 402.7,173.8 403.0,173.0 403.4,172.2 403.8,171.6 404.2,171.4 404.6,171.7 405.1,172.6 405.5,173.8 405.9,174.7 406.3,175.0 406.7,174.8 407.1,174.1 407.4,173.2 407.8,172.3 408.2,171.6 408.6,171.3 409.0,171.6 409.3,172.3 409.7,173.3 410.0,174.3 410.4,175.1 410.8,175.4 411.2,175.0 411.5,174.0 411.9,172.9 412.3,171.9 412.7,171.6 413.0,171.9 413.4,172.8 413.8,174.0 414.1,175.3 414.5,176.2 414.9,176.5 415.2,176.0 415.6,174.7 416.0,172.8 416.4,171.0 416.8,169.7 417.1,169.2 417.5,169.6 417.9,170.8 418.3,172.4 418.7,174.0 419.1,175.1 419.5,175.6 419.9,175.0 420.2,173.6 420.6,171.8 421.0,170.4 421.4,169.8 421.7,170.2 422.1,171.1 422.4,172.5 422.8,173.8 423.1,174.7 423.5,175.1 423.9,174.9 424.2,174.3 424.6,173.4 425.0,172.6 425.3,172.0 425.7,171.7 426.1,172.1 426.5,172.9 426.9,174.0 427.3,174.9 427.7,175.2 428.0,174.9 428.4,174.2 428.7,173.2 429.1,172.2 429.4,171.4 429.8,171.1 430.2,171.6 430.5,172.7 430.9,174.1 431.3,175.2 431.7,175.6 432.0,175.4 432.4,174.7 432.7,173.7 433.1,172.7 433.5,172.0 433.8,171.7 434.2,172.0 434.6,172.7 434.9,173.6 435.3,174.5 435.7,175.2 436.0,175.5 436.4,175.1 436.8,174.2 437.1,173.0 437.5,172.1 437.9,171.8 438.2,172.0 438.6,172.7 439.0,173.7 439.3,174.6 439.7,175.3 440.1,175.6 440.4,175.3 440.8,174.6 441.2,173.7 441.5,172.8 441.9,172.1 442.3,171.9 442.6,172.2 443.0,173.0 443.4,174.1 443.8,175.2 444.2,176.0 444.6,176.3 445.0,175.8 445.4,174.5 445.8,173.0 446.2,171.7 446.6,171.2 447.0,171.5 447.4,172.2 447.7,173.1 448.1,174.1 448.5,174.8 448.9,175.1 449.3,174.6 449.7,173.5 450.2,172.1 450.6,170.9 451.0,170.5 451.4,170.8 451.8,171.6 452.1,172.7 452.5,173.8 452.9,174.6 453.3,174.9 453.7,174.7 454.1,174.1 454.4,173.3 454.8,172.6 455.2,172.0 455.5,171.8 455.9,172.0 456.3,172.7 456.6,173.7 457.0,174.6 457.4,175.3 457.7,175.6 458.1,175.2 458.5,174.4 458.9,173.3 459.3,172.5 459.6,172.2 460.0,172.4 460.4,173.0 460.8,173.8 461.2,174.4 461.6,174.6 462.0,174.4 462.3,173.9 462.7,173.2 463.1,172.6 463.4,172.4 463.8,172.7 464.3,173.2 464.7,173.9 465.1,174.4 465.5,174.6 465.9,174.4 466.2,173.7 466.6,172.8 467.0,172.1 467.4,171.9 467.7,172.1 468.1,172.7 468.5,173.6 468.9,174.4 469.3,175.1 469.7,175.3 470.1,174.9 470.5,173.8 470.9,172.4 471.3,171.3 471.7,170.8 472.1,171.2 472.6,172.3 473.0,173.7 473.4,174.8 473.8,175.2 474.1,175.0 474.5,174.4 474.8,173.6 475.2,172.7 475.5,172.1 475.9,171.9 476.3,172.1 476.6,172.7 477.0,173.5 477.4,174.3 477.7,174.9 478.1,175.1 478.5,174.7 478.9,173.4 479.3,171.9 479.7,170.6 480.1,170.2 480.5,170.6 480.9,171.7 481.3,173.2 481.6,174.7 482.0,175.8 482.4,176.2 482.7,175.9 483.1,174.9 483.5,173.6 483.8,172.3 484.2,171.4 484.6,171.0 484.9,171.4 485.3,172.3 485.7,173.6 486.0,174.9 486.4,175.8 486.8,176.1 487.2,175.7 487.6,174.5 487.9,173.0 488.3,171.8 488.7,171.4 489.1,171.7 489.5,172.4 489.9,173.4 490.3,174.1 490.7,174.4 491.1,174.3 491.5,173.9 491.9,173.3 492.2,172.8 492.6,172.4 493.0,172.2 493.4,172.4 493.8,172.9 494.1,173.5 494.5,174.1 494.9,174.6 495.3,174.8 495.6,174.6 496.0,174.2 496.4,173.7 496.7,173.1 497.1,172.7 497.4,172.6 497.8,172.8 498.2,173.3 498.5,174.0 498.9,174.5 499.3,174.7 499.7,174.6 500.0,174.1 500.4,173.5 500.8,172.8 501.1,172.4 501.5,172.2 501.9,172.4 502.3,172.9 502.6,173.6 503.0,174.1 503.4,174.3 503.8,174.1 504.1,173.4 504.5,172.5 504.9,171.8 505.3,171.5 505.7,171.8 506.0,172.6 506.4,173.5 506.8,174.3 507.1,174.6 507.5,174.3 507.9,173.6 508.3,172.6 508.7,171.9 509.1,171.6 509.5,171.8 509.9,172.3 510.3,172.9 510.7,173.6 511.1,174.1 511.5,174.3 511.9,174.0 512.2,173.3 512.6,172.4 513.0,171.7 513.4,171.4 513.8,171.6 514.2,172.2 514.6,172.9 514.9,173.7 515.3,174.2 515.7,174.5 516.1,174.2 516.5,173.5 516.9,172.6 517.3,171.9 517.7,171.7 518.1,172.0 518.6,172.9 519.0,174.0 519.4,174.9 519.8,175.2 520.8,173.5 521.8,171.7 522.8,173.3 523.7,174.8 524.7,173.4 525.6,172.0 526.7,173.9 527.8,175.7 528.8,173.4 529.8,171.1 530.9,173.0 532.0,174.9 533.1,173.5 534.1,172.2 535.3,173.5 536.4,174.9 537.4,173.7 538.3,172.6 539.4,173.4 540.5,174.2 541.6,173.5 542.7,172.8 543.9,173.7 545.0,174.6 545.9,173.3 546.9,172.1 547.8,173.7 548.8,175.3 550.0,173.1 551.1,170.9 552.1,172.8 553.0,174.7 554.1,173.2 555.2,171.7 556.2,173.0 557.1,174.3 558.2,173.6 559.3,172.9 560.4,173.4 561.5,173.9 562.5,173.4 563.4,172.8 564.5,173.5 565.6,174.2 566.5,173.4 567.4,172.5 568.4,173.3 569.4,174.1 570.5,173.2 571.5,172.4 572.6,173.5 573.7,174.6 574.7,173.6 575.7,172.5 576.8,173.4 577.8,174.3 578.8,173.4 579.8,172.4 580.9,173.7 582.0,175.1 583.1,173.5 584.2,171.9 585.4,173.0 586.5,174.1 587.5,173.4 588.5,172.7 589.4,173.3 590.4,174.0 591.3,173.5 592.2,173.1 593.3,173.4 594.4,173.8 595.5,173.2 596.7,172.5 597.7,173.2 598.8,174.0 599.7,173.3 600.7,172.6 601.7,173.3 602.8,174.0 603.9,173.4 605.0,172.8 606.1,173.3 607.3,173.7 608.2,173.4 609.1,173.0 610.2,173.4 611.2,173.7 612.3,173.4 613.4,173.1 614.4,173.5 615.4,174.0 616.6,173.2 617.7,172.4 618.7,173.3 619.7,174.2 620.9,173.2 622.0,172.2 623.1,173.1 624.2,174.0 625.2,173.2 626.3,172.4 627.3,173.2 628.3,174.0 629.5,173.1 630.6,172.1 631.6,173.2 632.5,174.2 633.6,173.5 634.7,172.7 635.6,173.5 636.6,174.3 637.7,173.5 638.8,172.8 639.8,173.4 640.7,174.0 641.6,173.2 642.6,172.4 643.5,173.2 644.4,174.1 645.6,173.4 646.7,172.8 647.6,173.4 648.6,174.0 649.5,173.2 650.5,172.5 651.6,173.2 652.8,173.9 653.8,173.3 654.7,172.7 655.7,173.2 656.8,173.8 657.7,173.4 658.7,173.1 659.9,173.4 661.0,173.7 662.0,173.2 663.0,172.8 664.2,173.5 665.3,174.2 666.4,173.3 667.4,172.5 668.5,173.2 669.6,173.9 670.6,173.3 671.7,172.6 672.8,173.2 673.9,173.8 674.9,173.2 675.8,172.6 676.8,173.4 677.7,174.1 678.7,173.5 679.7,173.0 680.7,173.4 681.7,173.9 682.9,173.5 684.1,173.0 685.2,173.4 686.4,173.8 687.3,173.3 688.3,172.8 689.3,173.3 690.3,173.7 691.4,173.3 692.4,172.8 693.5,173.3 694.7,173.8 695.6,173.4 696.5,172.9 697.6,173.4 698.7,174.0 699.9,173.5 701.0,173.0 702.2,173.6 703.3,174.1 704.3,173.5 705.3,172.8 706.3,173.4 707.4,174.0 708.4,173.5 709.4,172.9 710.4,173.7 711.3,174.4 712.4,173.5 713.4,172.6 714.6,173.4 715.7,174.3 716.7,173.4 717.7,172.4 718.8,173.4 720.0,174.3 721.1,173.5 722.2,172.8 723.3,173.2 724.5,173.7 725.6,173.4 726.6,173.0 727.8,173.4 728.9,173.7 730.0,173.3 731.1,173.0 732.2,173.4 733.3,173.8 734.5,173.3 735.6,172.7 736.8,173.2 738.0,173.7 739.1,173.3 740.3,173.0 741.4,173.3 742.5,173.7 743.4,173.4 744.4,173.1 745.4,173.4 746.5,173.6 747.5,173.3 748.5,173.1 749.6,173.5 750.8,173.9 751.7,173.4 752.7,173.0 753.7,173.4 754.7,173.8 755.7,173.4 756.7,173.1 757.8,173.4 759.0,173.8 759.9,173.4 760.8,173.1 761.9,173.4 763.1,173.8 764.1,173.4 765.1,172.9 766.3,173.5 767.4,174.1 768.4,173.4 769.4,172.7 770.6,173.4 771.7,174.1 772.9,173.3 774.1,172.5 775.1,173.4 776.1,174.4 777.1,173.7 778.2,172.9 779.3,173.6 780.4,174.2 781.4,173.5 782.5,172.8 783.5,173.5 784.5,174.2 785.6,173.6 786.7,173.0 787.7,173.4 788.8,173.8 789.9,173.4 791.1,173.0 792.1,173.4 793.0,173.8 793.9,173.4 794.9,173.1 795.9,173.4 796.9,173.7 798.0,173.5 799.0,173.2 800.1,173.5 801.1,173.8 802.2,173.5 803.4,173.1 804.4,173.5 805.3,173.8 806.5,173.5 807.6,173.1 808.8,173.6 809.9,174.0 810.9,173.5 812.0,173.0 813.1,173.5 814.2,174.0 815.2,173.6 816.1,173.1 817.1,173.4 818.2,173.8 819.1,173.5 820.1,173.2 821.1,173.4 822.2,173.6 823.1,173.4 824.1,173.1 825.3,173.4 826.5,173.6 827.6,173.4 828.7,173.2 829.9,173.5 831.1,173.8 832.2,173.3 833.3,172.9 834.3,173.4 835.4,173.8 836.3,173.5 837.3,173.2 838.3,173.5 839.4,173.7 840.6,173.4 841.7,173.1 842.8,173.4 843.8,173.7 844.9,173.5 846.0,173.3 847.1,173.5 848.2,173.7 849.2,173.4 850.2,173.2 851.2,173.4 852.2,173.6 853.2,173.4 854.2,173.2 855.3,173.4 856.3,173.5 857.2,173.4 858.2,173.2 859.3,173.4 860.4,173.6 861.4,173.4 862.3,173.3 863.4,173.4 864.5,173.6 865.5,173.3 866.6,173.0 867.6,173.4 868.6,173.9 869.7,173.3 870.8,172.8 871.9,173.4 873.0,174.0 874.0,173.4 875.0,172.9 876.2,173.2 877.3,173.6 878.5,173.4 879.7,173.2 880.6,173.4 881.6,173.5 882.7,173.3 883.8,173.2 884.8,173.4 885.7,173.6 886.8,173.3 887.9,173.1 888.9,173.4 889.9,173.7 890.9,173.5 891.9,173.2 892.8,173.4 893.8,173.6 894.9,173.4 896.0,173.2 896.9,173.4 897.9,173.6 898.8,173.4 899.8,173.2 900.8,173.4 901.8,173.7 902.7,173.4 903.7,173.0 904.7,173.5 905.8,174.0 906.8,173.3 907.9,172.7 908.9,173.2 910.0,173.8 911.0,173.4 912.1,173.1 913.1,173.3 914.0,173.6 915.1,173.3 916.3,173.1 917.3,173.3 918.3,173.6 919.3,173.4 920.4,173.2 921.5,173.4 922.6,173.6 923.5,173.3 924.5,173.1 925.6,173.3 926.6,173.6 927.8,173.3 928.9,173.0 929.9,173.4 931.0,173.8 932.1,173.4 933.3,173.1 934.3,173.4 935.4,173.7 936.4,173.3 937.5,173.0 938.6,173.4 939.7,173.9 940.7,173.5 941.6,173.0 942.8,173.5 943.9,174.0 945.0,173.4 946.1,172.8 947.1,173.5 948.1,174.2 949.2,173.5 950.2,172.9 951.2,173.3 952.2,173.8 953.3,173.2 954.5,172.7 955.4,173.3 956.3,173.9 957.4,173.4 958.4,172.9 959.4,173.5 960.5,174.1 961.5,173.5 962.5,172.8 963.6,173.4 964.8,174.0 965.9,173.5 966.9,172.9 967.9,173.5 969.0,174.0 970.1,173.5 971.2,173.0 972.2,173.4 973.2,173.7 974.3,173.4 975.3,173.0 976.3,173.3 977.4,173.6 978.4,173.3 979.4,173.1 980.4,173.4 981.3,173.7 982.3,173.4 983.2,173.2 984.1,173.5 985.0,173.8 986.0,173.5 986.9,173.2 987.9,173.4 988.8,173.6 989.9,173.3 991.0,173.1 992.2,173.4 993.4,173.8 994.4,173.4 995.5,173.0 996.4,173.4 997.4,173.8 998.4,173.5 999.4,173.2 1000.6,173.5 1001.7,173.9 1002.7,173.5 1003.7,173.1 1004.9,173.6 1006.0,174.1 1007.1,173.3 1008.2,172.6 1009.1,173.2 1010.0,173.8 1011.0,173.4 1011.9,173.1 1013.1,173.6 1014.2,174.1 1015.1,173.5 1016.1,173.0 1017.0,173.5 1018.0,174.0 1019.1,173.4 1020.2,172.8 1021.2,173.3 1022.2,173.8 1023.2,173.5 1024.3,173.2 1025.3,173.4 1026.2,173.5 1027.4,173.3 1028.6,173.1 1029.7,173.3 1030.8,173.5 1031.8,173.4 1032.8,173.3 1033.8,173.5 1034.8,173.6 1035.7,173.4 1036.6,173.2 1037.7,173.4 1038.8,173.5 1039.9,173.3 1040.9,173.1 1042.0,173.4 1043.1,173.6 1044.2,173.4 1045.4,173.2 1046.4,173.4 1047.4,173.6 1048.6,173.4 1049.7,173.1 1050.9,173.4 1052.1,173.6 1053.0,173.4 1054.0,173.2 1055.0,173.5 1056.0,173.7 1056.9,173.4 1057.9,173.1 1059.0,173.4 1060.1,173.7 1061.0,173.3 1061.9,173.0 1063.0,173.4 1064.0,173.8 1065.1,173.4 1066.1,173.0 1067.2,173.4 1068.2,173.9 1069.4,173.4 1070.6,172.9 1071.6,173.3 1072.7,173.7 1073.7,173.4 1074.8,173.1 1075.9,173.5 1077.1,173.8 1078.2,173.4 1079.4,173.0 1080.5,173.4 1081.7,173.7 1082.7,173.4 1083.7,173.1 1084.7,173.4 1085.7,173.6 1086.7,173.4 1087.6,173.1 1088.7,173.3 1089.7,173.5 1090.9,173.4 1092.1,173.3 1093.2,173.4 1094.4,173.6 1095.4,173.4 1096.3,173.2 1097.4,173.4 1098.5,173.7 1099.5,173.4 1100.6,173.2 1101.8,173.4 1103.0,173.6 1104.1,173.4 1105.2,173.2 1106.2,173.4 1107.2,173.6 1108.3,173.4 1109.5,173.1 1110.6,173.4 1111.7,173.6 1112.8,173.4 1114.0,173.1 1114.9,173.4 1115.8,173.7 1117.0,173.4 1118.1,173.2 1119.2,173.4 1120.3,173.7 1121.3,173.3 1122.3,172.9 1123.5,173.4 1124.6,174.0 1125.7,173.4 1126.7,172.9 1127.8,173.5 1129.0,174.0 1130.0,173.3 1131.1,172.6 1132.1,173.4 1133.1,174.2 1134.2,173.6 1135.2,173.0 1136.3,173.4 1137.4,173.7 1138.5,173.4 1139.6,173.1 1140.8,173.5 1142.0,173.8 1143.1,173.5 1144.3,173.1 1145.3,173.4 1146.4,173.7 1147.4,173.3 1148.4,173.0 1149.3,173.3 1150.3,173.7 1151.2,173.3 1152.1,173.0 1153.3,173.3 1154.5,173.6 1155.5,173.3 1156.5,173.1 1157.6,173.4 1158.8,173.8 1159.8,173.4 1160.8,172.9 1161.7,173.3 1162.7,173.7 1163.8,173.4 1165.0,173.1 1166.0,173.5 1166.9,173.8 1167.9,173.5 1168.9,173.1 1170.1,173.5 1171.3,173.8 1172.4,173.5 1173.5,173.1 1174.7,173.4 1175.9,173.6 1177.0,173.4 1178.2,173.2 1179.4,173.4 1180.6,173.6 1181.7,173.4 1182.7,173.2 1183.9,173.4 1185.0,173.7 1186.0,173.3 1186.9,172.8 1188.1,173.4 1189.2,174.0 1190.3,173.5 1191.4,173.0 1192.5,173.5 1193.5,174.1 1194.7,173.4 1195.9,172.7 1196.8,173.3 1197.8,174.0 1198.9,173.5 1199.9,173.0 1200.9,173.3 1201.9,173.7 1202.9,173.3 1203.9,172.9 1204.9,173.4 1205.9,173.9 1207.0,173.3 1208.1,172.8 1209.1,173.3 1210.2,173.8 1211.4,173.4 1212.5,172.9 1213.7,173.5 1214.9,174.1 1215.8,173.5 1216.8,172.9 1218.0,173.4 1219.1,173.8 1220.2,173.4 1221.3,173.0 1222.2,173.4 1223.1,173.7 1224.1,173.4 1225.0,173.1 1226.1,173.4 1227.2,173.7 1228.4,173.4 1229.5,173.1 1230.6,173.4 1231.6,173.8 1232.7,173.4 1233.8,173.1 1234.9,173.4 1236.1,173.7 1237.1,173.4 1238.1,173.1 1239.1,173.4 1240.1,173.8 1241.1,173.4 1242.0,173.1 1243.0,173.3 1243.9,173.5 1245.0,173.4 1246.0,173.3 1247.1,173.4 1248.2,173.5 1249.3,173.3 1250.4,173.2 1251.5,173.5 1252.6,173.7" fill="none" stroke="#3cf43c" stroke-width="1.5"/>
<line x1="69.40" y1="104.00" x2="69.40" y2="239.50" stroke="#0000b0" stroke-width="2" />
<line x1="41.80" y1="100.60" x2="111.70" y2="100.60" stroke="#e8e800" stroke-width="1.6" />
<line x1="41.80" y1="97.60" x2="41.80" y2="103.60" stroke="#e8e800" stroke-width="1.2" />
<line x1="111.70" y1="97.60" x2="111.70" y2="103.60" stroke="#e8e800" stroke-width="1.2" />
<line x1="111.70" y1="100.60" x2="182.50" y2="100.60" stroke="#e00000" stroke-width="1.6" />
<line x1="111.70" y1="97.60" x2="111.70" y2="103.60" stroke="#e00000" stroke-width="1.2" />
<line x1="182.50" y1="97.60" x2="182.50" y2="103.60" stroke="#e00000" stroke-width="1.2" />
<line x1="182.50" y1="100.60" x2="253.60" y2="100.60" stroke="#40e8e0" stroke-width="1.6" />
<line x1="182.50" y1="97.60" x2="182.50" y2="103.60" stroke="#40e8e0" stroke-width="1.2" />
<line x1="253.60" y1="97.60" x2="253.60" y2="103.60" stroke="#40e8e0" stroke-width="1.2" />
<line x1="76.50" y1="242.50" x2="146.80" y2="242.50" stroke="#40e8e0" stroke-width="1.6" />
<line x1="76.50" y1="239.50" x2="76.50" y2="245.50" stroke="#40e8e0" stroke-width="1.2" />
<line x1="146.80" y1="239.50" x2="146.80" y2="245.50" stroke="#40e8e0" stroke-width="1.2" />
<line x1="146.80" y1="242.50" x2="218.00" y2="242.50" stroke="#e8e800" stroke-width="1.6" />
<line x1="146.80" y1="239.50" x2="146.80" y2="245.50" stroke="#e8e800" stroke-width="1.2" />
<line x1="218.00" y1="239.50" x2="218.00" y2="245.50" stroke="#e8e800" stroke-width="1.2" />
<line x1="0.00" y1="262.30" x2="1265.50" y2="262.30" stroke="#a8a8a8" stroke-width="1" />
<line x1="0.00" y1="461.30" x2="1265.50" y2="461.30" stroke="#a8a8a8" stroke-width="1" />
<line x1="252.90" y1="262.30" x2="252.90" y2="662.00" stroke="#d2d2d2" stroke-width="1.2" />
<line x1="506.10" y1="262.30" x2="506.10" y2="662.00" stroke="#d2d2d2" stroke-width="1.2" />
<line x1="759.30" y1="262.30" x2="759.30" y2="662.00" stroke="#d2d2d2" stroke-width="1.2" />
<line x1="1012.50" y1="262.30" x2="1012.50" y2="662.00" stroke="#d2d2d2" stroke-width="1.2" />
<line x1="1265.50" y1="48.00" x2="1265.50" y2="662.00" stroke="#c8c8c8" stroke-width="1" />
<text x="126.80" y="270.80" font-size="6.9" fill="#1e1e1e" text-anchor="middle" font-weight="normal" stroke="#1e1e1e" stroke-width="0.18" >Hamming, Seg: A</text>
<rect x="8.70" y="278.00" width="238.40" height="157.70" fill="#fcfcfc" />
<rect x="9.70" y="279.00" width="236.40" height="155.70" fill="#000" />
<line x1="14.40" y1="274.90" x2="14.40" y2="278.20" stroke="#333" stroke-width="0.9" />
<line x1="14.40" y1="436.20" x2="14.40" y2="439.20" stroke="#333" stroke-width="0.9" />
<text x="14.40" y="447.00" font-size="6.9" fill="#1e1e1e" text-anchor="middle" font-weight="normal" stroke="#1e1e1e" stroke-width="0.18" >-40</text>
<line x1="36.55" y1="276.40" x2="36.55" y2="278.20" stroke="#333" stroke-width="0.9" />
<line x1="36.55" y1="436.20" x2="36.55" y2="438.20" stroke="#333" stroke-width="0.9" />
<line x1="58.70" y1="274.90" x2="58.70" y2="278.20" stroke="#333" stroke-width="0.9" />
<line x1="58.70" y1="436.20" x2="58.70" y2="439.20" stroke="#333" stroke-width="0.9" />
<text x="58.70" y="447.00" font-size="6.9" fill="#1e1e1e" text-anchor="middle" font-weight="normal" stroke="#1e1e1e" stroke-width="0.18" >-20</text>
<line x1="80.85" y1="276.40" x2="80.85" y2="278.20" stroke="#333" stroke-width="0.9" />
<line x1="80.85" y1="436.20" x2="80.85" y2="438.20" stroke="#333" stroke-width="0.9" />
<line x1="103.00" y1="274.90" x2="103.00" y2="278.20" stroke="#333" stroke-width="0.9" />
<line x1="103.00" y1="436.20" x2="103.00" y2="439.20" stroke="#333" stroke-width="0.9" />
<text x="103.00" y="447.00" font-size="6.9" fill="#1e1e1e" text-anchor="middle" font-weight="normal" stroke="#1e1e1e" stroke-width="0.18" >0</text>
<line x1="125.15" y1="276.40" x2="125.15" y2="278.20" stroke="#333" stroke-width="0.9" />
<line x1="125.15" y1="436.20" x2="125.15" y2="438.20" stroke="#333" stroke-width="0.9" />
<line x1="147.30" y1="274.90" x2="147.30" y2="278.20" stroke="#333" stroke-width="0.9" />
<line x1="147.30" y1="436.20" x2="147.30" y2="439.20" stroke="#333" stroke-width="0.9" />
<text x="147.30" y="447.00" font-size="6.9" fill="#1e1e1e" text-anchor="middle" font-weight="normal" stroke="#1e1e1e" stroke-width="0.18" >20</text>
<line x1="169.45" y1="276.40" x2="169.45" y2="278.20" stroke="#333" stroke-width="0.9" />
<line x1="169.45" y1="436.20" x2="169.45" y2="438.20" stroke="#333" stroke-width="0.9" />
<line x1="191.60" y1="274.90" x2="191.60" y2="278.20" stroke="#333" stroke-width="0.9" />
<line x1="191.60" y1="436.20" x2="191.60" y2="439.20" stroke="#333" stroke-width="0.9" />
<text x="191.60" y="447.00" font-size="6.9" fill="#1e1e1e" text-anchor="middle" font-weight="normal" stroke="#1e1e1e" stroke-width="0.18" >40</text>
<line x1="213.75" y1="276.40" x2="213.75" y2="278.20" stroke="#333" stroke-width="0.9" />
<line x1="213.75" y1="436.20" x2="213.75" y2="438.20" stroke="#333" stroke-width="0.9" />
<line x1="235.90" y1="274.90" x2="235.90" y2="278.20" stroke="#333" stroke-width="0.9" />
<line x1="235.90" y1="436.20" x2="235.90" y2="439.20" stroke="#333" stroke-width="0.9" />
<text x="235.90" y="447.00" font-size="6.9" fill="#1e1e1e" text-anchor="middle" font-weight="normal" stroke="#1e1e1e" stroke-width="0.18" >60</text>
<text x="126.80" y="458.00" font-size="6.9" fill="#1e1e1e" text-anchor="middle" font-weight="normal" stroke="#1e1e1e" stroke-width="0.18" >Time [µs]</text>
<path d="M15.20,359.00 C16.20,359.00 19.20,359.00 21.20,359.00 C23.20,359.00 25.20,359.00 27.20,359.00 C29.20,359.00 31.20,359.00 33.20,359.00 C35.20,359.00 37.20,359.00 39.20,359.00 C41.20,359.00 43.20,359.00 45.20,359.00 C47.20,359.00 49.20,359.00 51.20,359.00 C53.20,359.00 55.20,359.00 57.20,359.00 C59.20,359.00 61.20,359.00 63.20,359.00 C65.20,359.00 67.20,359.00 69.20,359.00 C71.20,359.00 73.20,359.00 75.20,359.00 C77.20,359.00 79.20,359.00 81.20,359.00 C83.20,359.00 85.20,359.00 87.20,359.00 C89.20,359.00 91.20,359.00 93.20,359.00 C95.20,359.00 96.58,358.95 99.20,359.00 C101.82,359.05 106.64,359.46 108.94,359.32 C111.24,359.18 111.65,357.64 113.00,358.18 C114.36,358.72 115.30,362.84 117.06,362.57 C118.83,362.30 121.40,356.02 123.57,356.56 C125.73,357.10 128.17,367.26 130.07,365.82 C131.96,364.39 133.32,347.13 134.94,347.94 C136.57,348.76 138.06,369.61 139.82,370.70 C141.58,371.78 144.02,355.12 145.51,354.44 C147.00,353.77 147.27,368.67 148.76,366.63 C150.25,364.60 152.60,340.22 154.44,342.26 C156.29,344.29 158.10,378.15 159.81,378.82 C161.51,379.50 163.14,348.49 164.68,346.32 C166.23,344.15 167.58,366.36 169.07,365.82 C170.56,365.28 171.94,338.38 173.62,343.07 C175.30,347.75 177.25,396.46 179.15,393.94 C181.04,391.42 182.89,332.10 185.00,327.95 C187.11,323.81 189.74,362.49 191.83,369.07 C193.91,375.65 195.70,370.97 197.51,367.45 C199.33,363.93 200.76,347.81 202.71,347.94 C204.66,348.08 207.02,367.80 209.22,368.26 C211.41,368.72 213.55,350.44 215.88,350.71 C218.21,350.98 220.89,369.67 223.19,369.88 C225.49,370.10 227.61,352.96 229.69,352.01 C231.78,351.06 233.81,363.38 235.71,364.20 C237.60,365.01 240.18,358.10 241.07,356.88" fill="none" stroke="#e8e850" stroke-width="1.6"/>
<text x="126.80" y="470.20" font-size="6.9" fill="#1e1e1e" text-anchor="middle" font-weight="normal" stroke="#1e1e1e" stroke-width="0.18" >FFT, Seg: A</text>
<rect x="8.70" y="476.90" width="238.40" height="158.70" fill="#fcfcfc" />
<rect x="9.70" y="477.90" width="236.40" height="156.70" fill="#000" />
<line x1="16.94" y1="475.30" x2="16.94" y2="477.10" stroke="#333" stroke-width="0.9" />
<line x1="16.94" y1="636.10" x2="16.94" y2="638.10" stroke="#333" stroke-width="0.9" />
<line x1="27.50" y1="473.80" x2="27.50" y2="477.10" stroke="#333" stroke-width="0.9" />
<line x1="27.50" y1="636.10" x2="27.50" y2="639.10" stroke="#333" stroke-width="0.9" />
<text x="27.50" y="647.00" font-size="6.9" fill="#1e1e1e" text-anchor="middle" font-weight="normal" stroke="#1e1e1e" stroke-width="0.18" >100</text>
<line x1="38.06" y1="475.30" x2="38.06" y2="477.10" stroke="#333" stroke-width="0.9" />
<line x1="38.06" y1="636.10" x2="38.06" y2="638.10" stroke="#333" stroke-width="0.9" />
<line x1="48.62" y1="475.30" x2="48.62" y2="477.10" stroke="#333" stroke-width="0.9" />
<line x1="48.62" y1="636.10" x2="48.62" y2="638.10" stroke="#333" stroke-width="0.9" />
<line x1="59.18" y1="475.30" x2="59.18" y2="477.10" stroke="#333" stroke-width="0.9" />
<line x1="59.18" y1="636.10" x2="59.18" y2="638.10" stroke="#333" stroke-width="0.9" />
<line x1="69.74" y1="475.30" x2="69.74" y2="477.10" stroke="#333" stroke-width="0.9" />
<line x1="69.74" y1="636.10" x2="69.74" y2="638.10" stroke="#333" stroke-width="0.9" />
<line x1="80.30" y1="473.80" x2="80.30" y2="477.10" stroke="#333" stroke-width="0.9" />
<line x1="80.30" y1="636.10" x2="80.30" y2="639.10" stroke="#333" stroke-width="0.9" />
<text x="80.30" y="647.00" font-size="6.9" fill="#1e1e1e" text-anchor="middle" font-weight="normal" stroke="#1e1e1e" stroke-width="0.18" >150</text>
<line x1="90.86" y1="475.30" x2="90.86" y2="477.10" stroke="#333" stroke-width="0.9" />
<line x1="90.86" y1="636.10" x2="90.86" y2="638.10" stroke="#333" stroke-width="0.9" />
<line x1="101.42" y1="475.30" x2="101.42" y2="477.10" stroke="#333" stroke-width="0.9" />
<line x1="101.42" y1="636.10" x2="101.42" y2="638.10" stroke="#333" stroke-width="0.9" />
<line x1="111.98" y1="475.30" x2="111.98" y2="477.10" stroke="#333" stroke-width="0.9" />
<line x1="111.98" y1="636.10" x2="111.98" y2="638.10" stroke="#333" stroke-width="0.9" />
<line x1="122.54" y1="475.30" x2="122.54" y2="477.10" stroke="#333" stroke-width="0.9" />
<line x1="122.54" y1="636.10" x2="122.54" y2="638.10" stroke="#333" stroke-width="0.9" />
<line x1="133.10" y1="473.80" x2="133.10" y2="477.10" stroke="#333" stroke-width="0.9" />
<line x1="133.10" y1="636.10" x2="133.10" y2="639.10" stroke="#333" stroke-width="0.9" />
<text x="133.10" y="647.00" font-size="6.9" fill="#1e1e1e" text-anchor="middle" font-weight="normal" stroke="#1e1e1e" stroke-width="0.18" >200</text>
<line x1="143.66" y1="475.30" x2="143.66" y2="477.10" stroke="#333" stroke-width="0.9" />
<line x1="143.66" y1="636.10" x2="143.66" y2="638.10" stroke="#333" stroke-width="0.9" />
<line x1="154.22" y1="475.30" x2="154.22" y2="477.10" stroke="#333" stroke-width="0.9" />
<line x1="154.22" y1="636.10" x2="154.22" y2="638.10" stroke="#333" stroke-width="0.9" />
<line x1="164.78" y1="475.30" x2="164.78" y2="477.10" stroke="#333" stroke-width="0.9" />
<line x1="164.78" y1="636.10" x2="164.78" y2="638.10" stroke="#333" stroke-width="0.9" />
<line x1="175.34" y1="475.30" x2="175.34" y2="477.10" stroke="#333" stroke-width="0.9" />
<line x1="175.34" y1="636.10" x2="175.34" y2="638.10" stroke="#333" stroke-width="0.9" />
<line x1="185.90" y1="473.80" x2="185.90" y2="477.10" stroke="#333" stroke-width="0.9" />
<line x1="185.90" y1="636.10" x2="185.90" y2="639.10" stroke="#333" stroke-width="0.9" />
<text x="185.90" y="647.00" font-size="6.9" fill="#1e1e1e" text-anchor="middle" font-weight="normal" stroke="#1e1e1e" stroke-width="0.18" >250</text>
<line x1="196.46" y1="475.30" x2="196.46" y2="477.10" stroke="#333" stroke-width="0.9" />
<line x1="196.46" y1="636.10" x2="196.46" y2="638.10" stroke="#333" stroke-width="0.9" />
<line x1="207.02" y1="475.30" x2="207.02" y2="477.10" stroke="#333" stroke-width="0.9" />
<line x1="207.02" y1="636.10" x2="207.02" y2="638.10" stroke="#333" stroke-width="0.9" />
<line x1="217.58" y1="475.30" x2="217.58" y2="477.10" stroke="#333" stroke-width="0.9" />
<line x1="217.58" y1="636.10" x2="217.58" y2="638.10" stroke="#333" stroke-width="0.9" />
<line x1="228.14" y1="475.30" x2="228.14" y2="477.10" stroke="#333" stroke-width="0.9" />
<line x1="228.14" y1="636.10" x2="228.14" y2="638.10" stroke="#333" stroke-width="0.9" />
<line x1="238.70" y1="473.80" x2="238.70" y2="477.10" stroke="#333" stroke-width="0.9" />
<line x1="238.70" y1="636.10" x2="238.70" y2="639.10" stroke="#333" stroke-width="0.9" />
<text x="238.70" y="647.00" font-size="6.9" fill="#1e1e1e" text-anchor="middle" font-weight="normal" stroke="#1e1e1e" stroke-width="0.18" >300</text>
<text x="126.50" y="657.50" font-size="7.15" fill="#1e1e1e" text-anchor="middle" font-weight="normal" stroke="#1e1e1e" stroke-width="0.18" >Frequency [kHz]</text>
<polyline points="19.69,537.57 30.17,533.44 40.65,524.23 49.22,520.10 60.34,515.34 70.50,511.21 81.93,511.53 92.09,517.56 102.25,517.88 112.73,529.63 123.21,539.15 132.74,531.21 143.54,515.97 155.60,510.57 163.54,510.89 174.02,514.38 184.82,522.32 195.30,539.15 205.78,557.25 216.58,549.63 227.06,555.03 236.58,560.43" fill="none" stroke="#e8e850" stroke-width="1.5" stroke-linejoin="round"/>
<text x="380.00" y="270.80" font-size="6.9" fill="#1e1e1e" text-anchor="middle" font-weight="normal" stroke="#1e1e1e" stroke-width="0.18" >Hamming, Seg: B</text>
<rect x="261.90" y="278.00" width="238.40" height="157.70" fill="#fcfcfc" />
<rect x="262.90" y="279.00" width="236.40" height="155.70" fill="#000" />
<line x1="265.16" y1="276.40" x2="265.16" y2="278.20" stroke="#333" stroke-width="0.9" />
<line x1="265.16" y1="436.20" x2="265.16" y2="438.20" stroke="#333" stroke-width="0.9" />
<line x1="287.31" y1="274.90" x2="287.31" y2="278.20" stroke="#333" stroke-width="0.9" />
<line x1="287.31" y1="436.20" x2="287.31" y2="439.20" stroke="#333" stroke-width="0.9" />
<text x="287.31" y="447.00" font-size="6.9" fill="#1e1e1e" text-anchor="middle" font-weight="normal" stroke="#1e1e1e" stroke-width="0.18" >20</text>
<line x1="309.46" y1="276.40" x2="309.46" y2="278.20" stroke="#333" stroke-width="0.9" />
<line x1="309.46" y1="436.20" x2="309.46" y2="438.20" stroke="#333" stroke-width="0.9" />
<line x1="331.61" y1="274.90" x2="331.61" y2="278.20" stroke="#333" stroke-width="0.9" />
<line x1="331.61" y1="436.20" x2="331.61" y2="439.20" stroke="#333" stroke-width="0.9" />
<text x="331.61" y="447.00" font-size="6.9" fill="#1e1e1e" text-anchor="middle" font-weight="normal" stroke="#1e1e1e" stroke-width="0.18" >40</text>
<line x1="353.76" y1="276.40" x2="353.76" y2="278.20" stroke="#333" stroke-width="0.9" />
<line x1="353.76" y1="436.20" x2="353.76" y2="438.20" stroke="#333" stroke-width="0.9" />
<line x1="375.91" y1="274.90" x2="375.91" y2="278.20" stroke="#333" stroke-width="0.9" />
<line x1="375.91" y1="436.20" x2="375.91" y2="439.20" stroke="#333" stroke-width="0.9" />
<text x="375.91" y="447.00" font-size="6.9" fill="#1e1e1e" text-anchor="middle" font-weight="normal" stroke="#1e1e1e" stroke-width="0.18" >60</text>
<line x1="398.06" y1="276.40" x2="398.06" y2="278.20" stroke="#333" stroke-width="0.9" />
<line x1="398.06" y1="436.20" x2="398.06" y2="438.20" stroke="#333" stroke-width="0.9" />
<line x1="420.21" y1="274.90" x2="420.21" y2="278.20" stroke="#333" stroke-width="0.9" />
<line x1="420.21" y1="436.20" x2="420.21" y2="439.20" stroke="#333" stroke-width="0.9" />
<text x="420.21" y="447.00" font-size="6.9" fill="#1e1e1e" text-anchor="middle" font-weight="normal" stroke="#1e1e1e" stroke-width="0.18" >80</text>
<line x1="442.36" y1="276.40" x2="442.36" y2="278.20" stroke="#333" stroke-width="0.9" />
<line x1="442.36" y1="436.20" x2="442.36" y2="438.20" stroke="#333" stroke-width="0.9" />
<line x1="464.51" y1="274.90" x2="464.51" y2="278.20" stroke="#333" stroke-width="0.9" />
<line x1="464.51" y1="436.20" x2="464.51" y2="439.20" stroke="#333" stroke-width="0.9" />
<text x="464.51" y="447.00" font-size="6.9" fill="#1e1e1e" text-anchor="middle" font-weight="normal" stroke="#1e1e1e" stroke-width="0.18" >100</text>
<line x1="486.66" y1="276.40" x2="486.66" y2="278.20" stroke="#333" stroke-width="0.9" />
<line x1="486.66" y1="436.20" x2="486.66" y2="438.20" stroke="#333" stroke-width="0.9" />
<text x="380.00" y="458.00" font-size="6.9" fill="#1e1e1e" text-anchor="middle" font-weight="normal" stroke="#1e1e1e" stroke-width="0.18" >Time [µs]</text>
<path d="M269.29,359.80 C270.35,359.53 273.79,358.21 275.64,358.21 C277.49,358.21 278.82,359.69 280.40,359.80 C281.99,359.90 283.58,358.84 285.17,358.84 C286.76,358.84 288.45,360.27 289.93,359.80 C291.41,359.32 292.47,355.19 294.06,355.98 C295.65,356.78 297.66,364.72 299.46,364.56 C301.26,364.40 303.27,355.40 304.86,355.03 C306.44,354.66 307.50,363.29 308.99,362.34 C310.47,361.38 312.00,345.50 313.75,349.32 C315.50,353.13 317.61,389.01 319.46,385.20 C321.32,381.39 322.91,328.57 324.86,326.45 C326.82,324.33 329.20,364.29 331.21,372.50 C333.23,380.70 334.92,382.55 336.93,375.67 C338.94,368.79 341.22,328.67 343.28,331.21 C345.35,333.76 347.20,393.40 349.32,390.92 C351.43,388.43 353.71,310.10 355.98,316.29 C358.26,322.48 360.75,433.36 362.97,428.07 C365.19,422.78 367.20,286.49 369.32,284.53 C371.44,282.57 373.45,411.45 375.67,416.32 C377.90,421.19 380.38,314.70 382.66,313.75 C384.94,312.80 387.00,412.30 389.33,410.60 C391.66,408.91 394.36,303.69 396.63,303.59 C398.91,303.48 400.92,407.11 402.98,409.97 C405.05,412.83 406.95,323.01 409.02,320.74 C411.08,318.46 413.15,396.69 415.37,396.31 C417.59,395.94 420.08,318.78 422.35,318.51 C424.63,318.25 426.59,393.03 429.02,394.73 C431.46,396.42 434.42,329.10 436.96,328.67 C439.50,328.25 441.94,391.39 444.27,392.19 C446.60,392.98 448.77,335.77 450.94,333.44 C453.11,331.11 455.01,375.78 457.29,378.21 C459.56,380.65 462.05,350.06 464.59,348.05 C467.13,346.03 469.88,364.72 472.53,366.15 C475.18,367.58 478.09,357.68 480.47,356.62 C482.85,355.56 484.60,359.64 486.82,359.80 C489.04,359.95 492.64,357.94 493.81,357.57" fill="none" stroke="#40e0d0" stroke-width="1.6"/>
<text x="380.00" y="470.20" font-size="6.9" fill="#1e1e1e" text-anchor="middle" font-weight="normal" stroke="#1e1e1e" stroke-width="0.18" >FFT, Seg: B</text>
<rect x="261.90" y="476.90" width="238.40" height="158.70" fill="#fcfcfc" />
<rect x="262.90" y="477.90" width="236.40" height="156.70" fill="#000" />
<line x1="270.14" y1="475.30" x2="270.14" y2="477.10" stroke="#333" stroke-width="0.9" />
<line x1="270.14" y1="636.10" x2="270.14" y2="638.10" stroke="#333" stroke-width="0.9" />
<line x1="280.70" y1="473.80" x2="280.70" y2="477.10" stroke="#333" stroke-width="0.9" />
<line x1="280.70" y1="636.10" x2="280.70" y2="639.10" stroke="#333" stroke-width="0.9" />
<text x="280.70" y="647.00" font-size="6.9" fill="#1e1e1e" text-anchor="middle" font-weight="normal" stroke="#1e1e1e" stroke-width="0.18" >100</text>
<line x1="291.26" y1="475.30" x2="291.26" y2="477.10" stroke="#333" stroke-width="0.9" />
<line x1="291.26" y1="636.10" x2="291.26" y2="638.10" stroke="#333" stroke-width="0.9" />
<line x1="301.82" y1="475.30" x2="301.82" y2="477.10" stroke="#333" stroke-width="0.9" />
<line x1="301.82" y1="636.10" x2="301.82" y2="638.10" stroke="#333" stroke-width="0.9" />
<line x1="312.38" y1="475.30" x2="312.38" y2="477.10" stroke="#333" stroke-width="0.9" />
<line x1="312.38" y1="636.10" x2="312.38" y2="638.10" stroke="#333" stroke-width="0.9" />
<line x1="322.94" y1="475.30" x2="322.94" y2="477.10" stroke="#333" stroke-width="0.9" />
<line x1="322.94" y1="636.10" x2="322.94" y2="638.10" stroke="#333" stroke-width="0.9" />
<line x1="333.50" y1="473.80" x2="333.50" y2="477.10" stroke="#333" stroke-width="0.9" />
<line x1="333.50" y1="636.10" x2="333.50" y2="639.10" stroke="#333" stroke-width="0.9" />
<text x="333.50" y="647.00" font-size="6.9" fill="#1e1e1e" text-anchor="middle" font-weight="normal" stroke="#1e1e1e" stroke-width="0.18" >150</text>
<line x1="344.06" y1="475.30" x2="344.06" y2="477.10" stroke="#333" stroke-width="0.9" />
<line x1="344.06" y1="636.10" x2="344.06" y2="638.10" stroke="#333" stroke-width="0.9" />
<line x1="354.62" y1="475.30" x2="354.62" y2="477.10" stroke="#333" stroke-width="0.9" />
<line x1="354.62" y1="636.10" x2="354.62" y2="638.10" stroke="#333" stroke-width="0.9" />
<line x1="365.18" y1="475.30" x2="365.18" y2="477.10" stroke="#333" stroke-width="0.9" />
<line x1="365.18" y1="636.10" x2="365.18" y2="638.10" stroke="#333" stroke-width="0.9" />
<line x1="375.74" y1="475.30" x2="375.74" y2="477.10" stroke="#333" stroke-width="0.9" />
<line x1="375.74" y1="636.10" x2="375.74" y2="638.10" stroke="#333" stroke-width="0.9" />
<line x1="386.30" y1="473.80" x2="386.30" y2="477.10" stroke="#333" stroke-width="0.9" />
<line x1="386.30" y1="636.10" x2="386.30" y2="639.10" stroke="#333" stroke-width="0.9" />
<text x="386.30" y="647.00" font-size="6.9" fill="#1e1e1e" text-anchor="middle" font-weight="normal" stroke="#1e1e1e" stroke-width="0.18" >200</text>
<line x1="396.86" y1="475.30" x2="396.86" y2="477.10" stroke="#333" stroke-width="0.9" />
<line x1="396.86" y1="636.10" x2="396.86" y2="638.10" stroke="#333" stroke-width="0.9" />
<line x1="407.42" y1="475.30" x2="407.42" y2="477.10" stroke="#333" stroke-width="0.9" />
<line x1="407.42" y1="636.10" x2="407.42" y2="638.10" stroke="#333" stroke-width="0.9" />
<line x1="417.98" y1="475.30" x2="417.98" y2="477.10" stroke="#333" stroke-width="0.9" />
<line x1="417.98" y1="636.10" x2="417.98" y2="638.10" stroke="#333" stroke-width="0.9" />
<line x1="428.54" y1="475.30" x2="428.54" y2="477.10" stroke="#333" stroke-width="0.9" />
<line x1="428.54" y1="636.10" x2="428.54" y2="638.10" stroke="#333" stroke-width="0.9" />
<line x1="439.10" y1="473.80" x2="439.10" y2="477.10" stroke="#333" stroke-width="0.9" />
<line x1="439.10" y1="636.10" x2="439.10" y2="639.10" stroke="#333" stroke-width="0.9" />
<text x="439.10" y="647.00" font-size="6.9" fill="#1e1e1e" text-anchor="middle" font-weight="normal" stroke="#1e1e1e" stroke-width="0.18" >250</text>
<line x1="449.66" y1="475.30" x2="449.66" y2="477.10" stroke="#333" stroke-width="0.9" />
<line x1="449.66" y1="636.10" x2="449.66" y2="638.10" stroke="#333" stroke-width="0.9" />
<line x1="460.22" y1="475.30" x2="460.22" y2="477.10" stroke="#333" stroke-width="0.9" />
<line x1="460.22" y1="636.10" x2="460.22" y2="638.10" stroke="#333" stroke-width="0.9" />
<line x1="470.78" y1="475.30" x2="470.78" y2="477.10" stroke="#333" stroke-width="0.9" />
<line x1="470.78" y1="636.10" x2="470.78" y2="638.10" stroke="#333" stroke-width="0.9" />
<line x1="481.34" y1="475.30" x2="481.34" y2="477.10" stroke="#333" stroke-width="0.9" />
<line x1="481.34" y1="636.10" x2="481.34" y2="638.10" stroke="#333" stroke-width="0.9" />
<line x1="491.90" y1="473.80" x2="491.90" y2="477.10" stroke="#333" stroke-width="0.9" />
<line x1="491.90" y1="636.10" x2="491.90" y2="639.10" stroke="#333" stroke-width="0.9" />
<text x="491.90" y="647.00" font-size="6.9" fill="#1e1e1e" text-anchor="middle" font-weight="normal" stroke="#1e1e1e" stroke-width="0.18" >300</text>
<text x="379.70" y="657.50" font-size="7.15" fill="#1e1e1e" text-anchor="middle" font-weight="normal" stroke="#1e1e1e" stroke-width="0.18" >Frequency [kHz]</text>
<polyline points="274.05,512.16 283.58,507.40 293.74,528.67 303.59,522.32 314.38,531.21 324.86,502.00 335.03,513.11 345.50,482.63 355.98,482.63 366.15,494.70 376.63,504.22 386.79,513.75 397.90,510.89 408.06,510.26 417.59,524.86 428.07,518.51 438.23,522.64 448.71,547.09 459.83,537.57 469.35,541.69 480.47,562.97 489.36,590.92" fill="none" stroke="#40e0d0" stroke-width="1.5" stroke-linejoin="round"/>
<text x="633.20" y="270.80" font-size="6.9" fill="#1e1e1e" text-anchor="middle" font-weight="normal" stroke="#1e1e1e" stroke-width="0.18" >Hamming, Seg: C</text>
<rect x="515.10" y="278.00" width="238.40" height="157.70" fill="#fcfcfc" />
<rect x="516.10" y="279.00" width="236.40" height="155.70" fill="#000" />
<line x1="538.08" y1="276.40" x2="538.08" y2="278.20" stroke="#333" stroke-width="0.9" />
<line x1="538.08" y1="436.20" x2="538.08" y2="438.20" stroke="#333" stroke-width="0.9" />
<line x1="560.23" y1="274.90" x2="560.23" y2="278.20" stroke="#333" stroke-width="0.9" />
<line x1="560.23" y1="436.20" x2="560.23" y2="439.20" stroke="#333" stroke-width="0.9" />
<text x="560.23" y="447.00" font-size="6.9" fill="#1e1e1e" text-anchor="middle" font-weight="normal" stroke="#1e1e1e" stroke-width="0.18" >80</text>
<line x1="582.38" y1="276.40" x2="582.38" y2="278.20" stroke="#333" stroke-width="0.9" />
<line x1="582.38" y1="436.20" x2="582.38" y2="438.20" stroke="#333" stroke-width="0.9" />
<line x1="604.53" y1="274.90" x2="604.53" y2="278.20" stroke="#333" stroke-width="0.9" />
<line x1="604.53" y1="436.20" x2="604.53" y2="439.20" stroke="#333" stroke-width="0.9" />
<text x="604.53" y="447.00" font-size="6.9" fill="#1e1e1e" text-anchor="middle" font-weight="normal" stroke="#1e1e1e" stroke-width="0.18" >100</text>
<line x1="626.68" y1="276.40" x2="626.68" y2="278.20" stroke="#333" stroke-width="0.9" />
<line x1="626.68" y1="436.20" x2="626.68" y2="438.20" stroke="#333" stroke-width="0.9" />
<line x1="648.83" y1="274.90" x2="648.83" y2="278.20" stroke="#333" stroke-width="0.9" />
<line x1="648.83" y1="436.20" x2="648.83" y2="439.20" stroke="#333" stroke-width="0.9" />
<text x="648.83" y="447.00" font-size="6.9" fill="#1e1e1e" text-anchor="middle" font-weight="normal" stroke="#1e1e1e" stroke-width="0.18" >120</text>
<line x1="670.98" y1="276.40" x2="670.98" y2="278.20" stroke="#333" stroke-width="0.9" />
<line x1="670.98" y1="436.20" x2="670.98" y2="438.20" stroke="#333" stroke-width="0.9" />
<line x1="693.13" y1="274.90" x2="693.13" y2="278.20" stroke="#333" stroke-width="0.9" />
<line x1="693.13" y1="436.20" x2="693.13" y2="439.20" stroke="#333" stroke-width="0.9" />
<text x="693.13" y="447.00" font-size="6.9" fill="#1e1e1e" text-anchor="middle" font-weight="normal" stroke="#1e1e1e" stroke-width="0.18" >140</text>
<line x1="715.28" y1="276.40" x2="715.28" y2="278.20" stroke="#333" stroke-width="0.9" />
<line x1="715.28" y1="436.20" x2="715.28" y2="438.20" stroke="#333" stroke-width="0.9" />
<line x1="737.43" y1="274.90" x2="737.43" y2="278.20" stroke="#333" stroke-width="0.9" />
<line x1="737.43" y1="436.20" x2="737.43" y2="439.20" stroke="#333" stroke-width="0.9" />
<text x="737.43" y="447.00" font-size="6.9" fill="#1e1e1e" text-anchor="middle" font-weight="normal" stroke="#1e1e1e" stroke-width="0.18" >160</text>
<text x="633.20" y="458.00" font-size="6.9" fill="#1e1e1e" text-anchor="middle" font-weight="normal" stroke="#1e1e1e" stroke-width="0.18" >Time [µs]</text>
<path d="M522.29,355.98 C523.51,357.41 527.11,365.09 529.59,364.56 C532.08,364.03 534.99,352.44 537.22,352.81 C539.44,353.18 541.03,367.20 542.93,366.78 C544.84,366.36 546.64,349.42 548.65,350.27 C550.66,351.12 552.78,373.56 555.00,371.86 C557.22,370.17 559.60,338.15 561.99,340.11 C564.37,342.06 566.75,385.46 569.29,383.61 C571.83,381.76 574.74,325.55 577.23,328.99 C579.72,332.43 581.99,407.48 584.21,404.25 C586.44,401.03 588.29,308.67 590.57,309.62 C592.84,310.57 595.49,409.44 597.87,409.97 C600.25,410.50 602.37,314.01 604.86,312.80 C607.34,311.58 610.25,398.80 612.80,402.67 C615.34,406.53 617.72,342.06 620.10,335.98 C622.48,329.89 625.13,365.62 627.09,366.15 C629.04,366.68 629.84,332.38 631.85,339.15 C633.86,345.93 636.61,412.25 639.15,406.79 C641.69,401.34 644.29,305.81 647.09,306.44 C649.90,307.08 653.34,406.64 655.98,410.60 C658.63,414.57 660.64,337.41 662.97,330.26 C665.30,323.12 667.84,363.98 669.96,367.73 C672.07,371.49 673.56,353.18 675.67,352.81 C677.79,352.44 679.38,365.41 682.66,365.51 C685.94,365.62 692.19,353.97 695.36,353.44 C698.54,352.91 699.60,361.38 701.71,362.34 C703.83,363.29 706.21,359.32 708.06,359.16 C709.92,359.00 710.82,361.91 712.83,361.38 C714.84,360.85 718.01,355.98 720.13,355.98 C722.25,355.98 723.57,361.01 725.53,361.38 C727.49,361.75 729.76,358.31 731.88,358.21 C734.00,358.10 735.96,361.01 738.23,360.75 C740.51,360.48 744.11,357.04 745.54,356.62 C746.96,356.20 746.59,357.94 746.81,358.21" fill="none" stroke="#d01020" stroke-width="1.6"/>
<text x="633.20" y="470.20" font-size="6.9" fill="#1e1e1e" text-anchor="middle" font-weight="normal" stroke="#1e1e1e" stroke-width="0.18" >FFT, Seg: C</text>
<rect x="515.10" y="476.90" width="238.40" height="158.70" fill="#fcfcfc" />
<rect x="516.10" y="477.90" width="236.40" height="156.70" fill="#000" />
<line x1="523.34" y1="475.30" x2="523.34" y2="477.10" stroke="#333" stroke-width="0.9" />
<line x1="523.34" y1="636.10" x2="523.34" y2="638.10" stroke="#333" stroke-width="0.9" />
<line x1="533.90" y1="473.80" x2="533.90" y2="477.10" stroke="#333" stroke-width="0.9" />
<line x1="533.90" y1="636.10" x2="533.90" y2="639.10" stroke="#333" stroke-width="0.9" />
<text x="533.90" y="647.00" font-size="6.9" fill="#1e1e1e" text-anchor="middle" font-weight="normal" stroke="#1e1e1e" stroke-width="0.18" >100</text>
<line x1="544.46" y1="475.30" x2="544.46" y2="477.10" stroke="#333" stroke-width="0.9" />
<line x1="544.46" y1="636.10" x2="544.46" y2="638.10" stroke="#333" stroke-width="0.9" />
<line x1="555.02" y1="475.30" x2="555.02" y2="477.10" stroke="#333" stroke-width="0.9" />
<line x1="555.02" y1="636.10" x2="555.02" y2="638.10" stroke="#333" stroke-width="0.9" />
<line x1="565.58" y1="475.30" x2="565.58" y2="477.10" stroke="#333" stroke-width="0.9" />
<line x1="565.58" y1="636.10" x2="565.58" y2="638.10" stroke="#333" stroke-width="0.9" />
<line x1="576.14" y1="475.30" x2="576.14" y2="477.10" stroke="#333" stroke-width="0.9" />
<line x1="576.14" y1="636.10" x2="576.14" y2="638.10" stroke="#333" stroke-width="0.9" />
<line x1="586.70" y1="473.80" x2="586.70" y2="477.10" stroke="#333" stroke-width="0.9" />
<line x1="586.70" y1="636.10" x2="586.70" y2="639.10" stroke="#333" stroke-width="0.9" />
<text x="586.70" y="647.00" font-size="6.9" fill="#1e1e1e" text-anchor="middle" font-weight="normal" stroke="#1e1e1e" stroke-width="0.18" >150</text>
<line x1="597.26" y1="475.30" x2="597.26" y2="477.10" stroke="#333" stroke-width="0.9" />
<line x1="597.26" y1="636.10" x2="597.26" y2="638.10" stroke="#333" stroke-width="0.9" />
<line x1="607.82" y1="475.30" x2="607.82" y2="477.10" stroke="#333" stroke-width="0.9" />
<line x1="607.82" y1="636.10" x2="607.82" y2="638.10" stroke="#333" stroke-width="0.9" />
<line x1="618.38" y1="475.30" x2="618.38" y2="477.10" stroke="#333" stroke-width="0.9" />
<line x1="618.38" y1="636.10" x2="618.38" y2="638.10" stroke="#333" stroke-width="0.9" />
<line x1="628.94" y1="475.30" x2="628.94" y2="477.10" stroke="#333" stroke-width="0.9" />
<line x1="628.94" y1="636.10" x2="628.94" y2="638.10" stroke="#333" stroke-width="0.9" />
<line x1="639.50" y1="473.80" x2="639.50" y2="477.10" stroke="#333" stroke-width="0.9" />
<line x1="639.50" y1="636.10" x2="639.50" y2="639.10" stroke="#333" stroke-width="0.9" />
<text x="639.50" y="647.00" font-size="6.9" fill="#1e1e1e" text-anchor="middle" font-weight="normal" stroke="#1e1e1e" stroke-width="0.18" >200</text>
<line x1="650.06" y1="475.30" x2="650.06" y2="477.10" stroke="#333" stroke-width="0.9" />
<line x1="650.06" y1="636.10" x2="650.06" y2="638.10" stroke="#333" stroke-width="0.9" />
<line x1="660.62" y1="475.30" x2="660.62" y2="477.10" stroke="#333" stroke-width="0.9" />
<line x1="660.62" y1="636.10" x2="660.62" y2="638.10" stroke="#333" stroke-width="0.9" />
<line x1="671.18" y1="475.30" x2="671.18" y2="477.10" stroke="#333" stroke-width="0.9" />
<line x1="671.18" y1="636.10" x2="671.18" y2="638.10" stroke="#333" stroke-width="0.9" />
<line x1="681.74" y1="475.30" x2="681.74" y2="477.10" stroke="#333" stroke-width="0.9" />
<line x1="681.74" y1="636.10" x2="681.74" y2="638.10" stroke="#333" stroke-width="0.9" />
<line x1="692.30" y1="473.80" x2="692.30" y2="477.10" stroke="#333" stroke-width="0.9" />
<line x1="692.30" y1="636.10" x2="692.30" y2="639.10" stroke="#333" stroke-width="0.9" />
<text x="692.30" y="647.00" font-size="6.9" fill="#1e1e1e" text-anchor="middle" font-weight="normal" stroke="#1e1e1e" stroke-width="0.18" >250</text>
<line x1="702.86" y1="475.30" x2="702.86" y2="477.10" stroke="#333" stroke-width="0.9" />
<line x1="702.86" y1="636.10" x2="702.86" y2="638.10" stroke="#333" stroke-width="0.9" />
<line x1="713.42" y1="475.30" x2="713.42" y2="477.10" stroke="#333" stroke-width="0.9" />
<line x1="713.42" y1="636.10" x2="713.42" y2="638.10" stroke="#333" stroke-width="0.9" />
<line x1="723.98" y1="475.30" x2="723.98" y2="477.10" stroke="#333" stroke-width="0.9" />
<line x1="723.98" y1="636.10" x2="723.98" y2="638.10" stroke="#333" stroke-width="0.9" />
<line x1="734.54" y1="475.30" x2="734.54" y2="477.10" stroke="#333" stroke-width="0.9" />
<line x1="734.54" y1="636.10" x2="734.54" y2="638.10" stroke="#333" stroke-width="0.9" />
<line x1="745.10" y1="473.80" x2="745.10" y2="477.10" stroke="#333" stroke-width="0.9" />
<line x1="745.10" y1="636.10" x2="745.10" y2="639.10" stroke="#333" stroke-width="0.9" />
<text x="745.10" y="647.00" font-size="6.9" fill="#1e1e1e" text-anchor="middle" font-weight="normal" stroke="#1e1e1e" stroke-width="0.18" >300</text>
<text x="632.90" y="657.50" font-size="7.15" fill="#1e1e1e" text-anchor="middle" font-weight="normal" stroke="#1e1e1e" stroke-width="0.18" >Frequency [kHz]</text>
<polyline points="526.42,510.57 536.58,500.41 546.74,502.00 556.59,502.00 567.38,502.63 577.86,540.74 588.03,492.47 598.50,485.17 608.98,495.65 619.15,522.64 629.63,519.15 639.79,520.74 650.27,523.28 660.43,517.56 670.59,533.76 681.07,539.79 691.55,530.26 701.71,535.98 712.19,574.09 722.99,554.08 733.47,566.78 743.00,601.71" fill="none" stroke="#d01020" stroke-width="1.5" stroke-linejoin="round"/>
<text x="886.40" y="270.80" font-size="6.9" fill="#1e1e1e" text-anchor="middle" font-weight="normal" stroke="#1e1e1e" stroke-width="0.18" >Hamming, Seg: D</text>
<rect x="768.30" y="278.00" width="238.40" height="157.70" fill="#fcfcfc" />
<rect x="769.30" y="279.00" width="236.40" height="155.70" fill="#000" />
<line x1="788.84" y1="274.90" x2="788.84" y2="278.20" stroke="#333" stroke-width="0.9" />
<line x1="788.84" y1="436.20" x2="788.84" y2="439.20" stroke="#333" stroke-width="0.9" />
<text x="788.84" y="447.00" font-size="6.9" fill="#1e1e1e" text-anchor="middle" font-weight="normal" stroke="#1e1e1e" stroke-width="0.18" >120</text>
<line x1="810.99" y1="276.40" x2="810.99" y2="278.20" stroke="#333" stroke-width="0.9" />
<line x1="810.99" y1="436.20" x2="810.99" y2="438.20" stroke="#333" stroke-width="0.9" />
<line x1="833.14" y1="274.90" x2="833.14" y2="278.20" stroke="#333" stroke-width="0.9" />
<line x1="833.14" y1="436.20" x2="833.14" y2="439.20" stroke="#333" stroke-width="0.9" />
<text x="833.14" y="447.00" font-size="6.9" fill="#1e1e1e" text-anchor="middle" font-weight="normal" stroke="#1e1e1e" stroke-width="0.18" >140</text>
<line x1="855.29" y1="276.40" x2="855.29" y2="278.20" stroke="#333" stroke-width="0.9" />
<line x1="855.29" y1="436.20" x2="855.29" y2="438.20" stroke="#333" stroke-width="0.9" />
<line x1="877.44" y1="274.90" x2="877.44" y2="278.20" stroke="#333" stroke-width="0.9" />
<line x1="877.44" y1="436.20" x2="877.44" y2="439.20" stroke="#333" stroke-width="0.9" />
<text x="877.44" y="447.00" font-size="6.9" fill="#1e1e1e" text-anchor="middle" font-weight="normal" stroke="#1e1e1e" stroke-width="0.18" >160</text>
<line x1="899.59" y1="276.40" x2="899.59" y2="278.20" stroke="#333" stroke-width="0.9" />
<line x1="899.59" y1="436.20" x2="899.59" y2="438.20" stroke="#333" stroke-width="0.9" />
<line x1="921.74" y1="274.90" x2="921.74" y2="278.20" stroke="#333" stroke-width="0.9" />
<line x1="921.74" y1="436.20" x2="921.74" y2="439.20" stroke="#333" stroke-width="0.9" />
<text x="921.74" y="447.00" font-size="6.9" fill="#1e1e1e" text-anchor="middle" font-weight="normal" stroke="#1e1e1e" stroke-width="0.18" >180</text>
<line x1="943.89" y1="276.40" x2="943.89" y2="278.20" stroke="#333" stroke-width="0.9" />
<line x1="943.89" y1="436.20" x2="943.89" y2="438.20" stroke="#333" stroke-width="0.9" />
<line x1="966.04" y1="274.90" x2="966.04" y2="278.20" stroke="#333" stroke-width="0.9" />
<line x1="966.04" y1="436.20" x2="966.04" y2="439.20" stroke="#333" stroke-width="0.9" />
<text x="966.04" y="447.00" font-size="6.9" fill="#1e1e1e" text-anchor="middle" font-weight="normal" stroke="#1e1e1e" stroke-width="0.18" >200</text>
<line x1="988.19" y1="276.40" x2="988.19" y2="278.20" stroke="#333" stroke-width="0.9" />
<line x1="988.19" y1="436.20" x2="988.19" y2="438.20" stroke="#333" stroke-width="0.9" />
<text x="886.40" y="458.00" font-size="6.9" fill="#1e1e1e" text-anchor="middle" font-weight="normal" stroke="#1e1e1e" stroke-width="0.18" >Time [µs]</text>
<path d="M775.29,359.16 C776.08,359.95 777.94,364.88 780.05,363.92 C782.17,362.97 785.35,352.81 787.99,353.44 C790.64,354.08 793.39,368.10 795.93,367.73 C798.47,367.36 801.12,352.12 803.24,351.22 C805.35,350.32 806.57,361.44 808.63,362.34 C810.70,363.24 813.24,356.41 815.62,356.62 C818.00,356.83 820.91,362.55 822.92,363.61 C824.94,364.66 825.57,365.03 827.69,362.97 C829.80,360.91 833.25,350.80 835.63,351.22 C838.01,351.64 840.13,364.08 841.98,365.51 C843.83,366.94 844.89,359.69 846.74,359.80 C848.59,359.90 850.98,368.53 853.09,366.15 C855.21,363.76 857.33,345.08 859.44,345.50 C861.56,345.93 863.94,367.36 865.80,368.69 C867.65,370.01 868.71,351.86 870.56,353.44 C872.41,355.03 874.63,383.08 876.91,378.21 C879.19,373.34 881.83,321.63 884.21,324.23 C886.60,326.82 888.82,391.45 891.20,393.77 C893.58,396.10 896.12,341.85 898.50,338.20 C900.89,334.55 903.64,371.86 905.49,371.86 C907.34,371.86 907.77,336.24 909.62,338.20 C911.47,340.16 914.38,381.97 916.60,383.61 C918.83,385.25 920.68,351.75 922.96,348.05 C925.23,344.34 927.77,360.75 930.26,361.38 C932.75,362.02 935.50,349.37 937.88,351.86 C940.26,354.34 942.27,377.90 944.55,376.31 C946.83,374.72 949.31,343.65 951.54,342.33 C953.76,341.01 955.66,366.09 957.89,368.37 C960.11,370.65 962.49,357.15 964.87,355.98 C967.26,354.82 969.64,361.54 972.18,361.38 C974.72,361.22 977.63,354.77 980.12,355.03 C982.60,355.30 984.56,362.55 987.10,362.97 C989.64,363.39 993.24,358.26 995.36,357.57 C997.48,356.88 999.06,358.63 999.81,358.84" fill="none" stroke="#e8e850" stroke-width="1.6"/>
<text x="886.40" y="470.20" font-size="6.9" fill="#1e1e1e" text-anchor="middle" font-weight="normal" stroke="#1e1e1e" stroke-width="0.18" >FFT, Seg: D</text>
<rect x="768.30" y="476.90" width="238.40" height="158.70" fill="#fcfcfc" />
<rect x="769.30" y="477.90" width="236.40" height="156.70" fill="#000" />
<line x1="776.54" y1="475.30" x2="776.54" y2="477.10" stroke="#333" stroke-width="0.9" />
<line x1="776.54" y1="636.10" x2="776.54" y2="638.10" stroke="#333" stroke-width="0.9" />
<line x1="787.10" y1="473.80" x2="787.10" y2="477.10" stroke="#333" stroke-width="0.9" />
<line x1="787.10" y1="636.10" x2="787.10" y2="639.10" stroke="#333" stroke-width="0.9" />
<text x="787.10" y="647.00" font-size="6.9" fill="#1e1e1e" text-anchor="middle" font-weight="normal" stroke="#1e1e1e" stroke-width="0.18" >100</text>
<line x1="797.66" y1="475.30" x2="797.66" y2="477.10" stroke="#333" stroke-width="0.9" />
<line x1="797.66" y1="636.10" x2="797.66" y2="638.10" stroke="#333" stroke-width="0.9" />
<line x1="808.22" y1="475.30" x2="808.22" y2="477.10" stroke="#333" stroke-width="0.9" />
<line x1="808.22" y1="636.10" x2="808.22" y2="638.10" stroke="#333" stroke-width="0.9" />
<line x1="818.78" y1="475.30" x2="818.78" y2="477.10" stroke="#333" stroke-width="0.9" />
<line x1="818.78" y1="636.10" x2="818.78" y2="638.10" stroke="#333" stroke-width="0.9" />
<line x1="829.34" y1="475.30" x2="829.34" y2="477.10" stroke="#333" stroke-width="0.9" />
<line x1="829.34" y1="636.10" x2="829.34" y2="638.10" stroke="#333" stroke-width="0.9" />
<line x1="839.90" y1="473.80" x2="839.90" y2="477.10" stroke="#333" stroke-width="0.9" />
<line x1="839.90" y1="636.10" x2="839.90" y2="639.10" stroke="#333" stroke-width="0.9" />
<text x="839.90" y="647.00" font-size="6.9" fill="#1e1e1e" text-anchor="middle" font-weight="normal" stroke="#1e1e1e" stroke-width="0.18" >150</text>
<line x1="850.46" y1="475.30" x2="850.46" y2="477.10" stroke="#333" stroke-width="0.9" />
<line x1="850.46" y1="636.10" x2="850.46" y2="638.10" stroke="#333" stroke-width="0.9" />
<line x1="861.02" y1="475.30" x2="861.02" y2="477.10" stroke="#333" stroke-width="0.9" />
<line x1="861.02" y1="636.10" x2="861.02" y2="638.10" stroke="#333" stroke-width="0.9" />
<line x1="871.58" y1="475.30" x2="871.58" y2="477.10" stroke="#333" stroke-width="0.9" />
<line x1="871.58" y1="636.10" x2="871.58" y2="638.10" stroke="#333" stroke-width="0.9" />
<line x1="882.14" y1="475.30" x2="882.14" y2="477.10" stroke="#333" stroke-width="0.9" />
<line x1="882.14" y1="636.10" x2="882.14" y2="638.10" stroke="#333" stroke-width="0.9" />
<line x1="892.70" y1="473.80" x2="892.70" y2="477.10" stroke="#333" stroke-width="0.9" />
<line x1="892.70" y1="636.10" x2="892.70" y2="639.10" stroke="#333" stroke-width="0.9" />
<text x="892.70" y="647.00" font-size="6.9" fill="#1e1e1e" text-anchor="middle" font-weight="normal" stroke="#1e1e1e" stroke-width="0.18" >200</text>
<line x1="903.26" y1="475.30" x2="903.26" y2="477.10" stroke="#333" stroke-width="0.9" />
<line x1="903.26" y1="636.10" x2="903.26" y2="638.10" stroke="#333" stroke-width="0.9" />
<line x1="913.82" y1="475.30" x2="913.82" y2="477.10" stroke="#333" stroke-width="0.9" />
<line x1="913.82" y1="636.10" x2="913.82" y2="638.10" stroke="#333" stroke-width="0.9" />
<line x1="924.38" y1="475.30" x2="924.38" y2="477.10" stroke="#333" stroke-width="0.9" />
<line x1="924.38" y1="636.10" x2="924.38" y2="638.10" stroke="#333" stroke-width="0.9" />
<line x1="934.94" y1="475.30" x2="934.94" y2="477.10" stroke="#333" stroke-width="0.9" />
<line x1="934.94" y1="636.10" x2="934.94" y2="638.10" stroke="#333" stroke-width="0.9" />
<line x1="945.50" y1="473.80" x2="945.50" y2="477.10" stroke="#333" stroke-width="0.9" />
<line x1="945.50" y1="636.10" x2="945.50" y2="639.10" stroke="#333" stroke-width="0.9" />
<text x="945.50" y="647.00" font-size="6.9" fill="#1e1e1e" text-anchor="middle" font-weight="normal" stroke="#1e1e1e" stroke-width="0.18" >250</text>
<line x1="956.06" y1="475.30" x2="956.06" y2="477.10" stroke="#333" stroke-width="0.9" />
<line x1="956.06" y1="636.10" x2="956.06" y2="638.10" stroke="#333" stroke-width="0.9" />
<line x1="966.62" y1="475.30" x2="966.62" y2="477.10" stroke="#333" stroke-width="0.9" />
<line x1="966.62" y1="636.10" x2="966.62" y2="638.10" stroke="#333" stroke-width="0.9" />
<line x1="977.18" y1="475.30" x2="977.18" y2="477.10" stroke="#333" stroke-width="0.9" />
<line x1="977.18" y1="636.10" x2="977.18" y2="638.10" stroke="#333" stroke-width="0.9" />
<line x1="987.74" y1="475.30" x2="987.74" y2="477.10" stroke="#333" stroke-width="0.9" />
<line x1="987.74" y1="636.10" x2="987.74" y2="638.10" stroke="#333" stroke-width="0.9" />
<line x1="998.30" y1="473.80" x2="998.30" y2="477.10" stroke="#333" stroke-width="0.9" />
<line x1="998.30" y1="636.10" x2="998.30" y2="639.10" stroke="#333" stroke-width="0.9" />
<text x="998.30" y="647.00" font-size="6.9" fill="#1e1e1e" text-anchor="middle" font-weight="normal" stroke="#1e1e1e" stroke-width="0.18" >300</text>
<text x="886.10" y="657.50" font-size="7.15" fill="#1e1e1e" text-anchor="middle" font-weight="normal" stroke="#1e1e1e" stroke-width="0.18" >Frequency [kHz]</text>
<polyline points="780.05,512.16 790.22,508.35 799.74,521.69 810.22,525.50 820.38,528.67 830.86,512.16 841.03,532.17 851.50,509.62 861.98,498.51 872.15,505.17 882.63,512.16 892.79,527.40 903.27,534.39 913.43,529.63 923.59,531.21 934.07,543.92 944.23,543.28 954.71,561.38 965.19,551.22 975.99,560.75 986.47,567.73 995.36,582.66" fill="none" stroke="#e8e850" stroke-width="1.5" stroke-linejoin="round"/>
<text x="1139.60" y="270.80" font-size="6.9" fill="#1e1e1e" text-anchor="middle" font-weight="normal" stroke="#1e1e1e" stroke-width="0.18" >Hamming, Seg: E</text>
<rect x="1021.50" y="278.00" width="238.40" height="157.70" fill="#fcfcfc" />
<rect x="1022.50" y="279.00" width="236.40" height="155.70" fill="#000" />
<line x1="1039.60" y1="276.40" x2="1039.60" y2="278.20" stroke="#333" stroke-width="0.9" />
<line x1="1039.60" y1="436.20" x2="1039.60" y2="438.20" stroke="#333" stroke-width="0.9" />
<line x1="1061.75" y1="274.90" x2="1061.75" y2="278.20" stroke="#333" stroke-width="0.9" />
<line x1="1061.75" y1="436.20" x2="1061.75" y2="439.20" stroke="#333" stroke-width="0.9" />
<text x="1061.75" y="447.00" font-size="6.9" fill="#1e1e1e" text-anchor="middle" font-weight="normal" stroke="#1e1e1e" stroke-width="0.18" >180</text>
<line x1="1083.90" y1="276.40" x2="1083.90" y2="278.20" stroke="#333" stroke-width="0.9" />
<line x1="1083.90" y1="436.20" x2="1083.90" y2="438.20" stroke="#333" stroke-width="0.9" />
<line x1="1106.05" y1="274.90" x2="1106.05" y2="278.20" stroke="#333" stroke-width="0.9" />
<line x1="1106.05" y1="436.20" x2="1106.05" y2="439.20" stroke="#333" stroke-width="0.9" />
<text x="1106.05" y="447.00" font-size="6.9" fill="#1e1e1e" text-anchor="middle" font-weight="normal" stroke="#1e1e1e" stroke-width="0.18" >200</text>
<line x1="1128.20" y1="276.40" x2="1128.20" y2="278.20" stroke="#333" stroke-width="0.9" />
<line x1="1128.20" y1="436.20" x2="1128.20" y2="438.20" stroke="#333" stroke-width="0.9" />
<line x1="1150.35" y1="274.90" x2="1150.35" y2="278.20" stroke="#333" stroke-width="0.9" />
<line x1="1150.35" y1="436.20" x2="1150.35" y2="439.20" stroke="#333" stroke-width="0.9" />
<text x="1150.35" y="447.00" font-size="6.9" fill="#1e1e1e" text-anchor="middle" font-weight="normal" stroke="#1e1e1e" stroke-width="0.18" >220</text>
<line x1="1172.50" y1="276.40" x2="1172.50" y2="278.20" stroke="#333" stroke-width="0.9" />
<line x1="1172.50" y1="436.20" x2="1172.50" y2="438.20" stroke="#333" stroke-width="0.9" />
<line x1="1194.65" y1="274.90" x2="1194.65" y2="278.20" stroke="#333" stroke-width="0.9" />
<line x1="1194.65" y1="436.20" x2="1194.65" y2="439.20" stroke="#333" stroke-width="0.9" />
<text x="1194.65" y="447.00" font-size="6.9" fill="#1e1e1e" text-anchor="middle" font-weight="normal" stroke="#1e1e1e" stroke-width="0.18" >240</text>
<line x1="1216.80" y1="276.40" x2="1216.80" y2="278.20" stroke="#333" stroke-width="0.9" />
<line x1="1216.80" y1="436.20" x2="1216.80" y2="438.20" stroke="#333" stroke-width="0.9" />
<line x1="1238.95" y1="274.90" x2="1238.95" y2="278.20" stroke="#333" stroke-width="0.9" />
<line x1="1238.95" y1="436.20" x2="1238.95" y2="439.20" stroke="#333" stroke-width="0.9" />
<text x="1238.95" y="447.00" font-size="6.9" fill="#1e1e1e" text-anchor="middle" font-weight="normal" stroke="#1e1e1e" stroke-width="0.18" >260</text>
<text x="1139.60" y="458.00" font-size="6.9" fill="#1e1e1e" text-anchor="middle" font-weight="normal" stroke="#1e1e1e" stroke-width="0.18" >Time [µs]</text>
<path d="M1028.29,360.43 C1028.82,360.75 1029.72,362.86 1031.47,362.34 C1033.21,361.81 1036.65,357.41 1038.77,357.25 C1040.89,357.10 1042.21,361.59 1044.17,361.38 C1046.13,361.17 1048.56,355.19 1050.52,355.98 C1052.48,356.78 1053.80,366.31 1055.92,366.15 C1058.04,365.99 1060.79,355.98 1063.22,355.03 C1065.66,354.08 1068.14,360.59 1070.53,360.43 C1072.91,360.27 1075.29,351.27 1077.51,354.08 C1079.74,356.88 1081.64,380.28 1083.86,377.26 C1086.09,374.24 1088.63,335.82 1090.85,335.98 C1093.07,336.14 1094.77,375.94 1097.20,378.21 C1099.64,380.49 1102.92,350.85 1105.46,349.63 C1108.00,348.42 1109.96,373.71 1112.44,370.91 C1114.93,368.10 1117.90,329.26 1120.38,332.80 C1122.87,336.35 1125.09,390.44 1127.37,392.19 C1129.65,393.93 1131.13,347.62 1134.04,343.28 C1136.95,338.94 1142.08,363.55 1144.84,366.15 C1147.59,368.74 1148.80,359.48 1150.55,358.84 C1152.30,358.21 1153.73,362.97 1155.31,362.34 C1156.90,361.70 1158.23,354.29 1160.08,355.03 C1161.93,355.77 1164.21,367.84 1166.43,366.78 C1168.65,365.72 1171.14,348.42 1173.42,348.68 C1175.69,348.95 1178.07,367.20 1180.08,368.37 C1182.10,369.53 1183.63,356.67 1185.48,355.67 C1187.34,354.66 1188.55,362.18 1191.20,362.34 C1193.85,362.49 1198.61,356.51 1201.36,356.62 C1204.11,356.73 1205.60,362.71 1207.71,362.97 C1209.83,363.24 1211.42,358.74 1214.06,358.21 C1216.71,357.68 1220.68,359.69 1223.59,359.80 C1226.50,359.90 1229.15,358.74 1231.53,358.84 C1233.91,358.95 1235.76,360.43 1237.88,360.43 C1240.00,360.43 1241.74,359.05 1244.23,358.84 C1246.72,358.63 1251.38,359.11 1252.81,359.16" fill="none" stroke="#40e0d0" stroke-width="1.6"/>
<text x="1139.60" y="470.20" font-size="6.9" fill="#1e1e1e" text-anchor="middle" font-weight="normal" stroke="#1e1e1e" stroke-width="0.18" >FFT, Seg: E</text>
<rect x="1021.50" y="476.90" width="238.40" height="158.70" fill="#fcfcfc" />
<rect x="1022.50" y="477.90" width="236.40" height="156.70" fill="#000" />
<line x1="1029.74" y1="475.30" x2="1029.74" y2="477.10" stroke="#333" stroke-width="0.9" />
<line x1="1029.74" y1="636.10" x2="1029.74" y2="638.10" stroke="#333" stroke-width="0.9" />
<line x1="1040.30" y1="473.80" x2="1040.30" y2="477.10" stroke="#333" stroke-width="0.9" />
<line x1="1040.30" y1="636.10" x2="1040.30" y2="639.10" stroke="#333" stroke-width="0.9" />
<text x="1040.30" y="647.00" font-size="6.9" fill="#1e1e1e" text-anchor="middle" font-weight="normal" stroke="#1e1e1e" stroke-width="0.18" >100</text>
<line x1="1050.86" y1="475.30" x2="1050.86" y2="477.10" stroke="#333" stroke-width="0.9" />
<line x1="1050.86" y1="636.10" x2="1050.86" y2="638.10" stroke="#333" stroke-width="0.9" />
<line x1="1061.42" y1="475.30" x2="1061.42" y2="477.10" stroke="#333" stroke-width="0.9" />
<line x1="1061.42" y1="636.10" x2="1061.42" y2="638.10" stroke="#333" stroke-width="0.9" />
<line x1="1071.98" y1="475.30" x2="1071.98" y2="477.10" stroke="#333" stroke-width="0.9" />
<line x1="1071.98" y1="636.10" x2="1071.98" y2="638.10" stroke="#333" stroke-width="0.9" />
<line x1="1082.54" y1="475.30" x2="1082.54" y2="477.10" stroke="#333" stroke-width="0.9" />
<line x1="1082.54" y1="636.10" x2="1082.54" y2="638.10" stroke="#333" stroke-width="0.9" />
<line x1="1093.10" y1="473.80" x2="1093.10" y2="477.10" stroke="#333" stroke-width="0.9" />
<line x1="1093.10" y1="636.10" x2="1093.10" y2="639.10" stroke="#333" stroke-width="0.9" />
<text x="1093.10" y="647.00" font-size="6.9" fill="#1e1e1e" text-anchor="middle" font-weight="normal" stroke="#1e1e1e" stroke-width="0.18" >150</text>
<line x1="1103.66" y1="475.30" x2="1103.66" y2="477.10" stroke="#333" stroke-width="0.9" />
<line x1="1103.66" y1="636.10" x2="1103.66" y2="638.10" stroke="#333" stroke-width="0.9" />
<line x1="1114.22" y1="475.30" x2="1114.22" y2="477.10" stroke="#333" stroke-width="0.9" />
<line x1="1114.22" y1="636.10" x2="1114.22" y2="638.10" stroke="#333" stroke-width="0.9" />
<line x1="1124.78" y1="475.30" x2="1124.78" y2="477.10" stroke="#333" stroke-width="0.9" />
<line x1="1124.78" y1="636.10" x2="1124.78" y2="638.10" stroke="#333" stroke-width="0.9" />
<line x1="1135.34" y1="475.30" x2="1135.34" y2="477.10" stroke="#333" stroke-width="0.9" />
<line x1="1135.34" y1="636.10" x2="1135.34" y2="638.10" stroke="#333" stroke-width="0.9" />
<line x1="1145.90" y1="473.80" x2="1145.90" y2="477.10" stroke="#333" stroke-width="0.9" />
<line x1="1145.90" y1="636.10" x2="1145.90" y2="639.10" stroke="#333" stroke-width="0.9" />
<text x="1145.90" y="647.00" font-size="6.9" fill="#1e1e1e" text-anchor="middle" font-weight="normal" stroke="#1e1e1e" stroke-width="0.18" >200</text>
<line x1="1156.46" y1="475.30" x2="1156.46" y2="477.10" stroke="#333" stroke-width="0.9" />
<line x1="1156.46" y1="636.10" x2="1156.46" y2="638.10" stroke="#333" stroke-width="0.9" />
<line x1="1167.02" y1="475.30" x2="1167.02" y2="477.10" stroke="#333" stroke-width="0.9" />
<line x1="1167.02" y1="636.10" x2="1167.02" y2="638.10" stroke="#333" stroke-width="0.9" />
<line x1="1177.58" y1="475.30" x2="1177.58" y2="477.10" stroke="#333" stroke-width="0.9" />
<line x1="1177.58" y1="636.10" x2="1177.58" y2="638.10" stroke="#333" stroke-width="0.9" />
<line x1="1188.14" y1="475.30" x2="1188.14" y2="477.10" stroke="#333" stroke-width="0.9" />
<line x1="1188.14" y1="636.10" x2="1188.14" y2="638.10" stroke="#333" stroke-width="0.9" />
<line x1="1198.70" y1="473.80" x2="1198.70" y2="477.10" stroke="#333" stroke-width="0.9" />
<line x1="1198.70" y1="636.10" x2="1198.70" y2="639.10" stroke="#333" stroke-width="0.9" />
<text x="1198.70" y="647.00" font-size="6.9" fill="#1e1e1e" text-anchor="middle" font-weight="normal" stroke="#1e1e1e" stroke-width="0.18" >250</text>
<line x1="1209.26" y1="475.30" x2="1209.26" y2="477.10" stroke="#333" stroke-width="0.9" />
<line x1="1209.26" y1="636.10" x2="1209.26" y2="638.10" stroke="#333" stroke-width="0.9" />
<line x1="1219.82" y1="475.30" x2="1219.82" y2="477.10" stroke="#333" stroke-width="0.9" />
<line x1="1219.82" y1="636.10" x2="1219.82" y2="638.10" stroke="#333" stroke-width="0.9" />
<line x1="1230.38" y1="475.30" x2="1230.38" y2="477.10" stroke="#333" stroke-width="0.9" />
<line x1="1230.38" y1="636.10" x2="1230.38" y2="638.10" stroke="#333" stroke-width="0.9" />
<line x1="1240.94" y1="475.30" x2="1240.94" y2="477.10" stroke="#333" stroke-width="0.9" />
<line x1="1240.94" y1="636.10" x2="1240.94" y2="638.10" stroke="#333" stroke-width="0.9" />
<line x1="1251.50" y1="473.80" x2="1251.50" y2="477.10" stroke="#333" stroke-width="0.9" />
<line x1="1251.50" y1="636.10" x2="1251.50" y2="639.10" stroke="#333" stroke-width="0.9" />
<text x="1251.50" y="647.00" font-size="6.9" fill="#1e1e1e" text-anchor="middle" font-weight="normal" stroke="#1e1e1e" stroke-width="0.18" >300</text>
<text x="1139.30" y="657.50" font-size="7.15" fill="#1e1e1e" text-anchor="middle" font-weight="normal" stroke="#1e1e1e" stroke-width="0.18" >Frequency [kHz]</text>
<polyline points="1033.05,519.46 1041.95,519.46 1052.74,521.69 1063.22,526.45 1073.70,516.92 1084.50,508.99 1094.98,508.99 1105.46,504.86 1115.62,504.86 1125.78,535.98 1135.63,535.98 1146.42,595.68 1156.27,530.58 1166.43,520.10 1176.59,528.67 1187.07,550.27 1197.55,541.69 1207.71,544.87 1218.19,569.32 1228.99,577.26 1239.47,612.19 1249.00,605.84" fill="none" stroke="#40e0d0" stroke-width="1.5" stroke-linejoin="round"/>
<path d="M773.5 477 L773.5 487 L776 484.7 L778 489 L779.5 488.3 L777.6 484.2 L781 484 Z" fill="#fff" stroke="#000" stroke-width="0.7"/>
<rect x="0.00" y="662.00" width="1266.50" height="13.00" fill="#ffffff" />
<line x1="0.00" y1="661.80" x2="1266.50" y2="661.80" stroke="#a4a4a4" stroke-width="1.3" />
<path d="M0 663 H4 L7.5 675 L82 675 L84.5 663" fill="#fafafa" stroke="#7a7a7a" stroke-width="0.8"/>
<g transform="translate(9,664)"><path d="M0 5 H9.5" stroke="#30a040" stroke-width="1"/><path d="M2 3 V7 M3.5 1 V9.5 M5 2.5 V7.5 M6.5 3.5 V6.5 M8 4 V6" stroke="#40b050" stroke-width="1"/></g>
<text x="19.90" y="672.30" font-size="7.22" fill="#222" text-anchor="start" font-weight="normal" stroke="#222" stroke-width="0.18" >Feature Extraction</text>
<rect x="0.00" y="675.00" width="1269.00" height="2.00" fill="#eef0f3" /></svg></body></html>
